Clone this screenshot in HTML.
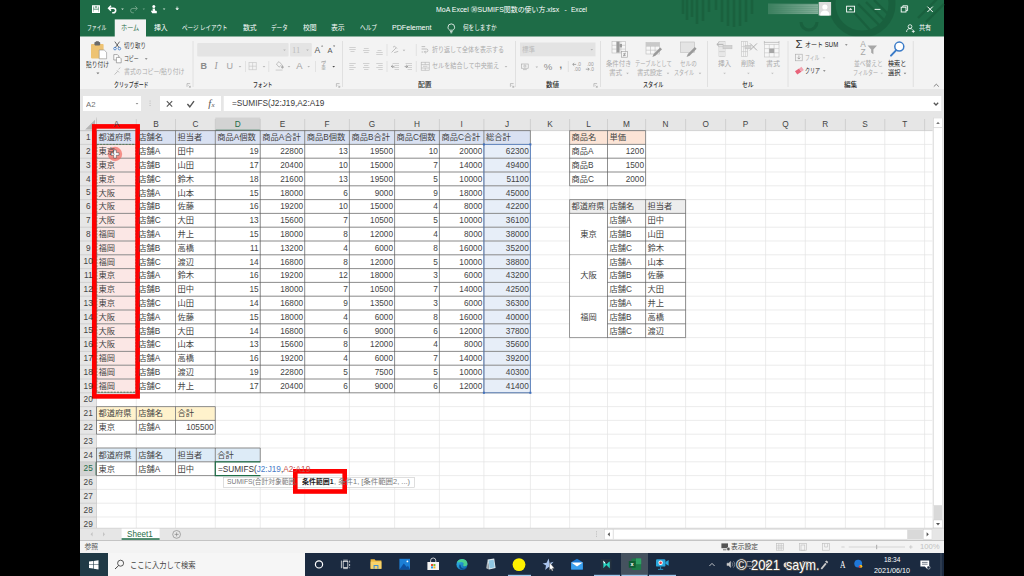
<!DOCTYPE html>
<html lang="ja"><head><meta charset="utf-8"><title>MoA Excel SUMIFS</title>
<style>
html,body{margin:0;padding:0;background:#000;}
body{width:1024px;height:576px;position:relative;overflow:hidden;font-family:"Liberation Sans","Noto Sans CJK JP",sans-serif;}
#g{position:absolute;left:0;top:0;}
.t{position:absolute;white-space:nowrap;line-height:1.5;display:block;}
</style></head><body>
<svg id="g" width="1024" height="576" viewBox="0 0 1024 576">
<rect x="80.00" y="0.00" width="864.00" height="37.00" fill="#1e6c47" />
<g fill="none" stroke="#185c3b" opacity="0.7"><path d="M683 0v14M687 0v20M692 0v17M697 0v24M703 0v21M709 0v12M716 0v10M722 0v22M728 0v26M734 0v27M740 0v26M746 0v22M752 0v14" stroke-width="2.6"/><path d="M801 22a8 8 0 0 0 16 0" stroke-width="3"/><circle cx="862" cy="4" r="30" stroke-width="7"/><path d="M850 8l20 22M858 4l22 22M866 2l20 20M874 0l16 16" stroke-width="2.4"/><path d="M918 18l20-20M926 22l18-18" stroke-width="2.4"/></g>
<rect x="80.00" y="36.50" width="864.00" height="52.50" fill="#f3f3f3" />
<rect x="80.00" y="89.00" width="864.00" height="29.00" fill="#e6e6e6" />
<rect x="114.75" y="19.40" width="31.25" height="17.60" fill="#f3f3f3" />
<rect x="83.00" y="96.00" width="58.00" height="15.00" fill="#fff" />
<rect x="160.00" y="96.00" width="61.00" height="15.00" fill="#fff" />
<rect x="223.75" y="96.00" width="717.50" height="15.00" fill="#fff" />
<rect x="80.00" y="117.50" width="864.00" height="411.00" fill="#e6e6e6" />
<rect x="96.50" y="130.60" width="836.00" height="397.40" fill="#fff" />
<rect x="80.00" y="528.00" width="864.00" height="12.50" fill="#e6e6e6" />
<rect x="80.00" y="540.50" width="864.00" height="12.50" fill="#f3f3f3" />
<line x1="80.00" y1="540.50" x2="944.00" y2="540.50" stroke="#d0d0d0" stroke-width="0.6" />
<rect x="96.50" y="130.60" width="433.90" height="13.80" fill="#d9e1f2" />
<rect x="96.50" y="144.40" width="39.80" height="248.40" fill="#fbe7e5" />
<rect x="483.90" y="144.40" width="46.50" height="248.40" fill="#e7eef8" />
<rect x="569.60" y="130.60" width="76.00" height="13.80" fill="#fce4d6" />
<rect x="569.60" y="199.60" width="116.00" height="13.80" fill="#ededed" />
<rect x="96.50" y="406.60" width="118.80" height="13.80" fill="#fff2cc" />
<rect x="96.50" y="448.00" width="163.75" height="13.80" fill="#ddebf7" />
<line x1="136.30" y1="130.60" x2="136.30" y2="528.00" stroke="#e4e4e4" stroke-width="0.7" />
<line x1="175.50" y1="130.60" x2="175.50" y2="528.00" stroke="#e4e4e4" stroke-width="0.7" />
<line x1="215.30" y1="130.60" x2="215.30" y2="528.00" stroke="#e4e4e4" stroke-width="0.7" />
<line x1="260.25" y1="130.60" x2="260.25" y2="528.00" stroke="#e4e4e4" stroke-width="0.7" />
<line x1="304.70" y1="130.60" x2="304.70" y2="528.00" stroke="#e4e4e4" stroke-width="0.7" />
<line x1="349.40" y1="130.60" x2="349.40" y2="528.00" stroke="#e4e4e4" stroke-width="0.7" />
<line x1="394.60" y1="130.60" x2="394.60" y2="528.00" stroke="#e4e4e4" stroke-width="0.7" />
<line x1="439.40" y1="130.60" x2="439.40" y2="528.00" stroke="#e4e4e4" stroke-width="0.7" />
<line x1="483.90" y1="130.60" x2="483.90" y2="528.00" stroke="#e4e4e4" stroke-width="0.7" />
<line x1="530.40" y1="130.60" x2="530.40" y2="528.00" stroke="#e4e4e4" stroke-width="0.7" />
<line x1="569.60" y1="130.60" x2="569.60" y2="528.00" stroke="#e4e4e4" stroke-width="0.7" />
<line x1="607.50" y1="130.60" x2="607.50" y2="528.00" stroke="#e4e4e4" stroke-width="0.7" />
<line x1="645.60" y1="130.60" x2="645.60" y2="528.00" stroke="#e4e4e4" stroke-width="0.7" />
<line x1="685.60" y1="130.60" x2="685.60" y2="528.00" stroke="#e4e4e4" stroke-width="0.7" />
<line x1="725.60" y1="130.60" x2="725.60" y2="528.00" stroke="#e4e4e4" stroke-width="0.7" />
<line x1="765.60" y1="130.60" x2="765.60" y2="528.00" stroke="#e4e4e4" stroke-width="0.7" />
<line x1="805.30" y1="130.60" x2="805.30" y2="528.00" stroke="#e4e4e4" stroke-width="0.7" />
<line x1="845.40" y1="130.60" x2="845.40" y2="528.00" stroke="#e4e4e4" stroke-width="0.7" />
<line x1="884.80" y1="130.60" x2="884.80" y2="528.00" stroke="#e4e4e4" stroke-width="0.7" />
<line x1="924.60" y1="130.60" x2="924.60" y2="528.00" stroke="#e4e4e4" stroke-width="0.7" />
<line x1="96.50" y1="144.40" x2="932.50" y2="144.40" stroke="#e4e4e4" stroke-width="0.7" />
<line x1="96.50" y1="158.20" x2="932.50" y2="158.20" stroke="#e4e4e4" stroke-width="0.7" />
<line x1="96.50" y1="172.00" x2="932.50" y2="172.00" stroke="#e4e4e4" stroke-width="0.7" />
<line x1="96.50" y1="185.80" x2="932.50" y2="185.80" stroke="#e4e4e4" stroke-width="0.7" />
<line x1="96.50" y1="199.60" x2="932.50" y2="199.60" stroke="#e4e4e4" stroke-width="0.7" />
<line x1="96.50" y1="213.40" x2="932.50" y2="213.40" stroke="#e4e4e4" stroke-width="0.7" />
<line x1="96.50" y1="227.20" x2="932.50" y2="227.20" stroke="#e4e4e4" stroke-width="0.7" />
<line x1="96.50" y1="241.00" x2="932.50" y2="241.00" stroke="#e4e4e4" stroke-width="0.7" />
<line x1="96.50" y1="254.80" x2="932.50" y2="254.80" stroke="#e4e4e4" stroke-width="0.7" />
<line x1="96.50" y1="268.60" x2="932.50" y2="268.60" stroke="#e4e4e4" stroke-width="0.7" />
<line x1="96.50" y1="282.40" x2="932.50" y2="282.40" stroke="#e4e4e4" stroke-width="0.7" />
<line x1="96.50" y1="296.20" x2="932.50" y2="296.20" stroke="#e4e4e4" stroke-width="0.7" />
<line x1="96.50" y1="310.00" x2="932.50" y2="310.00" stroke="#e4e4e4" stroke-width="0.7" />
<line x1="96.50" y1="323.80" x2="932.50" y2="323.80" stroke="#e4e4e4" stroke-width="0.7" />
<line x1="96.50" y1="337.60" x2="932.50" y2="337.60" stroke="#e4e4e4" stroke-width="0.7" />
<line x1="96.50" y1="351.40" x2="932.50" y2="351.40" stroke="#e4e4e4" stroke-width="0.7" />
<line x1="96.50" y1="365.20" x2="932.50" y2="365.20" stroke="#e4e4e4" stroke-width="0.7" />
<line x1="96.50" y1="379.00" x2="932.50" y2="379.00" stroke="#e4e4e4" stroke-width="0.7" />
<line x1="96.50" y1="392.80" x2="932.50" y2="392.80" stroke="#e4e4e4" stroke-width="0.7" />
<line x1="96.50" y1="406.60" x2="932.50" y2="406.60" stroke="#e4e4e4" stroke-width="0.7" />
<line x1="96.50" y1="420.40" x2="932.50" y2="420.40" stroke="#e4e4e4" stroke-width="0.7" />
<line x1="96.50" y1="434.20" x2="932.50" y2="434.20" stroke="#e4e4e4" stroke-width="0.7" />
<line x1="96.50" y1="448.00" x2="932.50" y2="448.00" stroke="#e4e4e4" stroke-width="0.7" />
<line x1="96.50" y1="461.80" x2="932.50" y2="461.80" stroke="#e4e4e4" stroke-width="0.7" />
<line x1="96.50" y1="475.60" x2="932.50" y2="475.60" stroke="#e4e4e4" stroke-width="0.7" />
<line x1="96.50" y1="489.40" x2="932.50" y2="489.40" stroke="#e4e4e4" stroke-width="0.7" />
<line x1="96.50" y1="503.20" x2="932.50" y2="503.20" stroke="#e4e4e4" stroke-width="0.7" />
<line x1="96.50" y1="517.00" x2="932.50" y2="517.00" stroke="#e4e4e4" stroke-width="0.7" />
<rect x="215.30" y="117.50" width="44.95" height="13.10" fill="#d3d3d3" />
<line x1="215.30" y1="130.30" x2="260.25" y2="130.30" stroke="#1e6c47" stroke-width="1.2" />
<rect x="80.00" y="461.80" width="16.50" height="13.80" fill="#d3d3d3" />
<line x1="96.20" y1="461.80" x2="96.20" y2="475.60" stroke="#1e6c47" stroke-width="1.2" />
<line x1="96.50" y1="119.00" x2="96.50" y2="130.60" stroke="#c6c6c6" stroke-width="0.7" />
<line x1="136.30" y1="119.00" x2="136.30" y2="130.60" stroke="#c6c6c6" stroke-width="0.7" />
<line x1="175.50" y1="119.00" x2="175.50" y2="130.60" stroke="#c6c6c6" stroke-width="0.7" />
<line x1="215.30" y1="119.00" x2="215.30" y2="130.60" stroke="#c6c6c6" stroke-width="0.7" />
<line x1="260.25" y1="119.00" x2="260.25" y2="130.60" stroke="#c6c6c6" stroke-width="0.7" />
<line x1="304.70" y1="119.00" x2="304.70" y2="130.60" stroke="#c6c6c6" stroke-width="0.7" />
<line x1="349.40" y1="119.00" x2="349.40" y2="130.60" stroke="#c6c6c6" stroke-width="0.7" />
<line x1="394.60" y1="119.00" x2="394.60" y2="130.60" stroke="#c6c6c6" stroke-width="0.7" />
<line x1="439.40" y1="119.00" x2="439.40" y2="130.60" stroke="#c6c6c6" stroke-width="0.7" />
<line x1="483.90" y1="119.00" x2="483.90" y2="130.60" stroke="#c6c6c6" stroke-width="0.7" />
<line x1="530.40" y1="119.00" x2="530.40" y2="130.60" stroke="#c6c6c6" stroke-width="0.7" />
<line x1="569.60" y1="119.00" x2="569.60" y2="130.60" stroke="#c6c6c6" stroke-width="0.7" />
<line x1="607.50" y1="119.00" x2="607.50" y2="130.60" stroke="#c6c6c6" stroke-width="0.7" />
<line x1="645.60" y1="119.00" x2="645.60" y2="130.60" stroke="#c6c6c6" stroke-width="0.7" />
<line x1="685.60" y1="119.00" x2="685.60" y2="130.60" stroke="#c6c6c6" stroke-width="0.7" />
<line x1="725.60" y1="119.00" x2="725.60" y2="130.60" stroke="#c6c6c6" stroke-width="0.7" />
<line x1="765.60" y1="119.00" x2="765.60" y2="130.60" stroke="#c6c6c6" stroke-width="0.7" />
<line x1="805.30" y1="119.00" x2="805.30" y2="130.60" stroke="#c6c6c6" stroke-width="0.7" />
<line x1="845.40" y1="119.00" x2="845.40" y2="130.60" stroke="#c6c6c6" stroke-width="0.7" />
<line x1="884.80" y1="119.00" x2="884.80" y2="130.60" stroke="#c6c6c6" stroke-width="0.7" />
<line x1="924.60" y1="119.00" x2="924.60" y2="130.60" stroke="#c6c6c6" stroke-width="0.7" />
<line x1="80.00" y1="130.60" x2="96.50" y2="130.60" stroke="#c6c6c6" stroke-width="0.7" />
<line x1="80.00" y1="144.40" x2="96.50" y2="144.40" stroke="#c6c6c6" stroke-width="0.7" />
<line x1="80.00" y1="158.20" x2="96.50" y2="158.20" stroke="#c6c6c6" stroke-width="0.7" />
<line x1="80.00" y1="172.00" x2="96.50" y2="172.00" stroke="#c6c6c6" stroke-width="0.7" />
<line x1="80.00" y1="185.80" x2="96.50" y2="185.80" stroke="#c6c6c6" stroke-width="0.7" />
<line x1="80.00" y1="199.60" x2="96.50" y2="199.60" stroke="#c6c6c6" stroke-width="0.7" />
<line x1="80.00" y1="213.40" x2="96.50" y2="213.40" stroke="#c6c6c6" stroke-width="0.7" />
<line x1="80.00" y1="227.20" x2="96.50" y2="227.20" stroke="#c6c6c6" stroke-width="0.7" />
<line x1="80.00" y1="241.00" x2="96.50" y2="241.00" stroke="#c6c6c6" stroke-width="0.7" />
<line x1="80.00" y1="254.80" x2="96.50" y2="254.80" stroke="#c6c6c6" stroke-width="0.7" />
<line x1="80.00" y1="268.60" x2="96.50" y2="268.60" stroke="#c6c6c6" stroke-width="0.7" />
<line x1="80.00" y1="282.40" x2="96.50" y2="282.40" stroke="#c6c6c6" stroke-width="0.7" />
<line x1="80.00" y1="296.20" x2="96.50" y2="296.20" stroke="#c6c6c6" stroke-width="0.7" />
<line x1="80.00" y1="310.00" x2="96.50" y2="310.00" stroke="#c6c6c6" stroke-width="0.7" />
<line x1="80.00" y1="323.80" x2="96.50" y2="323.80" stroke="#c6c6c6" stroke-width="0.7" />
<line x1="80.00" y1="337.60" x2="96.50" y2="337.60" stroke="#c6c6c6" stroke-width="0.7" />
<line x1="80.00" y1="351.40" x2="96.50" y2="351.40" stroke="#c6c6c6" stroke-width="0.7" />
<line x1="80.00" y1="365.20" x2="96.50" y2="365.20" stroke="#c6c6c6" stroke-width="0.7" />
<line x1="80.00" y1="379.00" x2="96.50" y2="379.00" stroke="#c6c6c6" stroke-width="0.7" />
<line x1="80.00" y1="392.80" x2="96.50" y2="392.80" stroke="#c6c6c6" stroke-width="0.7" />
<line x1="80.00" y1="406.60" x2="96.50" y2="406.60" stroke="#c6c6c6" stroke-width="0.7" />
<line x1="80.00" y1="420.40" x2="96.50" y2="420.40" stroke="#c6c6c6" stroke-width="0.7" />
<line x1="80.00" y1="434.20" x2="96.50" y2="434.20" stroke="#c6c6c6" stroke-width="0.7" />
<line x1="80.00" y1="448.00" x2="96.50" y2="448.00" stroke="#c6c6c6" stroke-width="0.7" />
<line x1="80.00" y1="461.80" x2="96.50" y2="461.80" stroke="#c6c6c6" stroke-width="0.7" />
<line x1="80.00" y1="475.60" x2="96.50" y2="475.60" stroke="#c6c6c6" stroke-width="0.7" />
<line x1="80.00" y1="489.40" x2="96.50" y2="489.40" stroke="#c6c6c6" stroke-width="0.7" />
<line x1="80.00" y1="503.20" x2="96.50" y2="503.20" stroke="#c6c6c6" stroke-width="0.7" />
<line x1="80.00" y1="517.00" x2="96.50" y2="517.00" stroke="#c6c6c6" stroke-width="0.7" />
<line x1="80.00" y1="130.60" x2="932.50" y2="130.60" stroke="#c6c6c6" stroke-width="0.7" />
<line x1="96.50" y1="117.50" x2="96.50" y2="528.00" stroke="#c6c6c6" stroke-width="0.7" />
<path d="M95 119.8v9.8h-9.8z" fill="#b5b5b5"/>
<line x1="96.50" y1="130.60" x2="530.40" y2="130.60" stroke="#555" stroke-width="0.62" />
<line x1="96.50" y1="144.40" x2="530.40" y2="144.40" stroke="#555" stroke-width="0.62" />
<line x1="96.50" y1="158.20" x2="530.40" y2="158.20" stroke="#555" stroke-width="0.62" />
<line x1="96.50" y1="172.00" x2="530.40" y2="172.00" stroke="#555" stroke-width="0.62" />
<line x1="96.50" y1="185.80" x2="530.40" y2="185.80" stroke="#555" stroke-width="0.62" />
<line x1="96.50" y1="199.60" x2="530.40" y2="199.60" stroke="#555" stroke-width="0.62" />
<line x1="96.50" y1="213.40" x2="530.40" y2="213.40" stroke="#555" stroke-width="0.62" />
<line x1="96.50" y1="227.20" x2="530.40" y2="227.20" stroke="#555" stroke-width="0.62" />
<line x1="96.50" y1="241.00" x2="530.40" y2="241.00" stroke="#555" stroke-width="0.62" />
<line x1="96.50" y1="254.80" x2="530.40" y2="254.80" stroke="#555" stroke-width="0.62" />
<line x1="96.50" y1="268.60" x2="530.40" y2="268.60" stroke="#555" stroke-width="0.62" />
<line x1="96.50" y1="282.40" x2="530.40" y2="282.40" stroke="#555" stroke-width="0.62" />
<line x1="96.50" y1="296.20" x2="530.40" y2="296.20" stroke="#555" stroke-width="0.62" />
<line x1="96.50" y1="310.00" x2="530.40" y2="310.00" stroke="#555" stroke-width="0.62" />
<line x1="96.50" y1="323.80" x2="530.40" y2="323.80" stroke="#555" stroke-width="0.62" />
<line x1="96.50" y1="337.60" x2="530.40" y2="337.60" stroke="#555" stroke-width="0.62" />
<line x1="96.50" y1="351.40" x2="530.40" y2="351.40" stroke="#555" stroke-width="0.62" />
<line x1="96.50" y1="365.20" x2="530.40" y2="365.20" stroke="#555" stroke-width="0.62" />
<line x1="96.50" y1="379.00" x2="530.40" y2="379.00" stroke="#555" stroke-width="0.62" />
<line x1="96.50" y1="392.80" x2="530.40" y2="392.80" stroke="#555" stroke-width="0.62" />
<line x1="96.50" y1="130.60" x2="96.50" y2="392.80" stroke="#555" stroke-width="0.62" />
<line x1="136.30" y1="130.60" x2="136.30" y2="392.80" stroke="#555" stroke-width="0.62" />
<line x1="175.50" y1="130.60" x2="175.50" y2="392.80" stroke="#555" stroke-width="0.62" />
<line x1="215.30" y1="130.60" x2="215.30" y2="392.80" stroke="#555" stroke-width="0.62" />
<line x1="260.25" y1="130.60" x2="260.25" y2="392.80" stroke="#555" stroke-width="0.62" />
<line x1="304.70" y1="130.60" x2="304.70" y2="392.80" stroke="#555" stroke-width="0.62" />
<line x1="349.40" y1="130.60" x2="349.40" y2="392.80" stroke="#555" stroke-width="0.62" />
<line x1="394.60" y1="130.60" x2="394.60" y2="392.80" stroke="#555" stroke-width="0.62" />
<line x1="439.40" y1="130.60" x2="439.40" y2="392.80" stroke="#555" stroke-width="0.62" />
<line x1="483.90" y1="130.60" x2="483.90" y2="392.80" stroke="#555" stroke-width="0.62" />
<line x1="530.40" y1="130.60" x2="530.40" y2="392.80" stroke="#555" stroke-width="0.62" />
<line x1="569.60" y1="130.60" x2="645.60" y2="130.60" stroke="#555" stroke-width="0.62" />
<line x1="569.60" y1="144.40" x2="645.60" y2="144.40" stroke="#555" stroke-width="0.62" />
<line x1="569.60" y1="158.20" x2="645.60" y2="158.20" stroke="#555" stroke-width="0.62" />
<line x1="569.60" y1="172.00" x2="645.60" y2="172.00" stroke="#555" stroke-width="0.62" />
<line x1="569.60" y1="185.80" x2="645.60" y2="185.80" stroke="#555" stroke-width="0.62" />
<line x1="569.60" y1="130.60" x2="569.60" y2="185.80" stroke="#555" stroke-width="0.62" />
<line x1="607.50" y1="130.60" x2="607.50" y2="185.80" stroke="#555" stroke-width="0.62" />
<line x1="645.60" y1="130.60" x2="645.60" y2="185.80" stroke="#555" stroke-width="0.62" />
<line x1="96.50" y1="406.60" x2="215.30" y2="406.60" stroke="#555" stroke-width="0.62" />
<line x1="96.50" y1="420.40" x2="215.30" y2="420.40" stroke="#555" stroke-width="0.62" />
<line x1="96.50" y1="434.20" x2="215.30" y2="434.20" stroke="#555" stroke-width="0.62" />
<line x1="96.50" y1="406.60" x2="96.50" y2="434.20" stroke="#555" stroke-width="0.62" />
<line x1="136.30" y1="406.60" x2="136.30" y2="434.20" stroke="#555" stroke-width="0.62" />
<line x1="175.50" y1="406.60" x2="175.50" y2="434.20" stroke="#555" stroke-width="0.62" />
<line x1="215.30" y1="406.60" x2="215.30" y2="434.20" stroke="#555" stroke-width="0.62" />
<line x1="96.50" y1="448.00" x2="260.25" y2="448.00" stroke="#555" stroke-width="0.62" />
<line x1="96.50" y1="461.80" x2="260.25" y2="461.80" stroke="#555" stroke-width="0.62" />
<line x1="96.50" y1="475.60" x2="260.25" y2="475.60" stroke="#555" stroke-width="0.62" />
<line x1="96.50" y1="448.00" x2="96.50" y2="475.60" stroke="#555" stroke-width="0.62" />
<line x1="136.30" y1="448.00" x2="136.30" y2="475.60" stroke="#555" stroke-width="0.62" />
<line x1="175.50" y1="448.00" x2="175.50" y2="475.60" stroke="#555" stroke-width="0.62" />
<line x1="215.30" y1="448.00" x2="215.30" y2="475.60" stroke="#555" stroke-width="0.62" />
<line x1="260.25" y1="448.00" x2="260.25" y2="475.60" stroke="#555" stroke-width="0.62" />
<line x1="569.60" y1="199.60" x2="685.60" y2="199.60" stroke="#555" stroke-width="0.62" />
<line x1="569.60" y1="213.40" x2="685.60" y2="213.40" stroke="#555" stroke-width="0.62" />
<line x1="607.50" y1="227.20" x2="685.60" y2="227.20" stroke="#555" stroke-width="0.62" />
<line x1="607.50" y1="241.00" x2="685.60" y2="241.00" stroke="#555" stroke-width="0.62" />
<line x1="569.60" y1="254.80" x2="685.60" y2="254.80" stroke="#555" stroke-width="0.62" />
<line x1="607.50" y1="268.60" x2="685.60" y2="268.60" stroke="#555" stroke-width="0.62" />
<line x1="607.50" y1="282.40" x2="685.60" y2="282.40" stroke="#555" stroke-width="0.62" />
<line x1="569.60" y1="296.20" x2="685.60" y2="296.20" stroke="#555" stroke-width="0.62" />
<line x1="607.50" y1="310.00" x2="685.60" y2="310.00" stroke="#555" stroke-width="0.62" />
<line x1="607.50" y1="323.80" x2="685.60" y2="323.80" stroke="#555" stroke-width="0.62" />
<line x1="569.60" y1="337.60" x2="685.60" y2="337.60" stroke="#555" stroke-width="0.62" />
<line x1="569.60" y1="199.60" x2="569.60" y2="337.60" stroke="#555" stroke-width="0.62" />
<line x1="607.50" y1="199.60" x2="607.50" y2="337.60" stroke="#555" stroke-width="0.62" />
<line x1="645.60" y1="199.60" x2="645.60" y2="337.60" stroke="#555" stroke-width="0.62" />
<line x1="685.60" y1="199.60" x2="685.60" y2="337.60" stroke="#555" stroke-width="0.62" />
<rect x="570.10" y="213.90" width="36.90" height="40.40" fill="#fff" />
<rect x="570.10" y="255.30" width="36.90" height="40.40" fill="#fff" />
<rect x="570.10" y="296.70" width="36.90" height="40.40" fill="#fff" />
<rect x="215.80" y="462.30" width="100.00" height="12.80" fill="#fff" />
<path d="M260.25 461.80H215.30V475.60H260.25" fill="none" stroke="#1e6c47" stroke-width="1.2"/>
<rect x="483.90" y="144.40" width="46.50" height="248.40" fill="none" stroke="#6089c9" stroke-width="0.85"/>
<rect x="482.90" y="143.40" width="2.00" height="2.00" fill="#3f6fbd" />
<rect x="529.40" y="143.40" width="2.00" height="2.00" fill="#3f6fbd" />
<rect x="482.90" y="391.80" width="2.00" height="2.00" fill="#3f6fbd" />
<rect x="529.40" y="391.80" width="2.00" height="2.00" fill="#3f6fbd" />
<rect x="96.80" y="144.40" width="39.20" height="247.80" fill="none" stroke="#5a7a5a" stroke-width="1" stroke-dasharray="2 1.2"/>
<rect x="933.50" y="117.50" width="9.00" height="411.00" fill="#f0f0f0" />
<rect x="933.70" y="118.00" width="8.60" height="9.50" fill="#fff" stroke="#cfcfcf" stroke-width="0.5"/>
<path d="M936.2 124l1.8-2.2 1.8 2.2z" fill="#777"/>
<rect x="933.70" y="127.80" width="8.60" height="377.70" fill="#fff" stroke="#d5d5d5" stroke-width="0.5"/>
<rect x="933.70" y="505.50" width="8.60" height="14.50" fill="#d9d9d9" />
<rect x="933.70" y="520.00" width="8.60" height="8.00" fill="#fff" stroke="#cfcfcf" stroke-width="0.5"/>
<path d="M936 523l2 2.4 2-2.4z" fill="#555"/>
<g stroke="#fff" fill="none" stroke-width="1.2"><path d="M92.6 5.8h6.8v6.6h-6.8z"/><path d="M94.2 5.8v2.4h3.6v-2.4" /><path d="M94 12.4v-2.4h4v2.4" fill="#fff"/><path d="M109 8.2h4.4a2.3 2.3 0 0 1 0 4.6h-1.2" stroke-width="1.5"/><path d="M111 5.8l-2.4 2.4 2.4 2.4" stroke-width="1.5"/></g>
<g stroke="#6fa387" fill="none" stroke-width="1"><path d="M137 8.4h-4.2a2.2 2.2 0 0 0 0 4.4h1"/><path d="M135.2 6.2l2.2 2.2-2.2 2.2"/></g>
<path d="M121.2 8.6l1.3 1.4 1.3-1.4z" fill="#cfe3d8"/><path d="M142.6 8.6l1.2 1.3 1.2-1.3z" fill="#6fa387"/>
<g fill="#fff"><circle cx="153.8" cy="6.6" r="1.5"/><path d="M152.6 8.4h2.4v2l1.8.6v2.2h-4.6l-1.3-2.2 1-.5.7.8z"/></g>
<path d="M162.8 8.6l1.3 1.4 1.3-1.4z" fill="#cfe3d8"/><path d="M175.9 8.6h2.6l-1.3 1.4zM176.2 7.2h2" stroke="#fff" stroke-width="0.6" fill="#fff"/>
<defs><linearGradient id="ug" x1="0" x2="1"><stop offset="0" stop-color="#fff" stop-opacity="0"/><stop offset="1" stop-color="#fff" stop-opacity="0.75"/></linearGradient></defs>
<rect x="768.00" y="3.40" width="50.70" height="10.80" fill="#fff" fill-opacity="0.13"/>
<rect x="768.00" y="4.60" width="50.00" height="0.90" fill="url(#ug)" />
<rect x="768.00" y="6.60" width="50.00" height="0.90" fill="url(#ug)" />
<rect x="768.00" y="8.60" width="50.00" height="0.90" fill="url(#ug)" />
<rect x="768.00" y="10.60" width="50.00" height="0.90" fill="url(#ug)" />
<rect x="768.00" y="12.60" width="50.00" height="0.90" fill="url(#ug)" />
<rect x="818.70" y="2.00" width="12.40" height="13.50" fill="#dcdcdc" />
<g fill="#fff"><circle cx="824.9" cy="7" r="2.6"/><path d="M820.2 15.5c0-3.4 2-5 4.7-5s4.7 1.6 4.7 5z"/></g>
<g stroke="#fff" fill="none" stroke-width="0.9"><rect x="846.6" y="6.2" width="8" height="5.8"/><path d="M849.2 9.8l1.4-1.6 1.4 1.6z" fill="#fff" stroke-width="0.5"/><path d="M874.6 9.4h5.8"/><rect x="901.2" y="7.2" width="4.8" height="4.8"/><path d="M902.8 7.2v-1.4h4.8v4.8h-1.6"/><path d="M927.4 6.6l5.4 5.4M932.8 6.6l-5.4 5.4" stroke-width="1"/></g>
<g stroke="#fff" fill="none" stroke-width="0.8"><circle cx="910" cy="26.6" r="1.9"/><path d="M906.6 32c0-2.4 1.4-3.4 3.4-3.4 1.2 0 2 .4 2.6 1M911.8 31.4h3M913.3 29.9v3"/></g>
<g stroke="#fff" fill="none" stroke-width="0.8"><path d="M449.6 30.2c-1.2-1-1.6-1.9-1.6-3a3.3 3.3 0 0 1 6.6 0c0 1.1-.4 2-1.6 3z"/><path d="M450 31.6h2.6M450.4 32.8h1.8"/></g>
<line x1="193.00" y1="41.00" x2="193.00" y2="87.00" stroke="#dadada" stroke-width="0.8" />
<line x1="342.50" y1="41.00" x2="342.50" y2="87.00" stroke="#dadada" stroke-width="0.8" />
<line x1="515.50" y1="41.00" x2="515.50" y2="87.00" stroke="#dadada" stroke-width="0.8" />
<line x1="600.50" y1="41.00" x2="600.50" y2="87.00" stroke="#dadada" stroke-width="0.8" />
<line x1="707.50" y1="41.00" x2="707.50" y2="87.00" stroke="#dadada" stroke-width="0.8" />
<line x1="788.00" y1="41.00" x2="788.00" y2="87.00" stroke="#dadada" stroke-width="0.8" />
<line x1="913.25" y1="41.00" x2="913.25" y2="87.00" stroke="#dadada" stroke-width="0.8" />
<g><rect x="91" y="44" width="12.6" height="14.4" rx="0.8" fill="#eec373"/><rect x="94.4" y="42" width="5.8" height="3.4" rx="0.8" fill="#6b6b6b"/><rect x="95.8" y="41.2" width="3" height="1.6" fill="#6b6b6b"/><path d="M99.2 50h5l2.4 2.4v6.4h-7.4z" fill="#fff" stroke="#8c8c8c" stroke-width="0.6"/></g>
<path d="M96.4 72.6l1.5 1.6 1.5-1.6z" fill="#777"/>
<g stroke="#444" stroke-width="0.8" fill="none"><path d="M114.8 41.6l4.4 6.2M119.6 41.6l-4.4 6.2"/></g><g stroke="#3a78c9" stroke-width="0.8" fill="none"><circle cx="115" cy="48.6" r="1.3"/><circle cx="119.4" cy="48.6" r="1.3"/></g>
<g stroke="#777" stroke-width="0.6" fill="#fff"><path d="M113.8 54.6h3.6l1.4 1.4v4h-5z"/><path d="M116.4 57.4h3.4l1.4 1.4v4h-4.8z"/></g>
<path d="M144.8 58.2l1.4 1.5 1.4-1.5z" fill="#777"/>
<g stroke="#b5b5b5" stroke-width="0.9" fill="none"><path d="M114.6 74.6l3-3.2M117 70.4l2 2M118.6 69.4l1.6-1.8"/></g>
<path d="M187.0 86.8v-3.2h3.2M188.4 85.4l1.8 1.8M190.4 85.8v1.5h-1.5" stroke="#8e8e8e" stroke-width="0.5" fill="none"/>
<path d="M336.4 86.8v-3.2h3.2M337.8 85.4l1.8 1.8M339.8 85.8v1.5h-1.5" stroke="#8e8e8e" stroke-width="0.5" fill="none"/>
<path d="M510.4 86.8v-3.2h3.2M511.8 85.4l1.8 1.8M513.8 85.8v1.5h-1.5" stroke="#8e8e8e" stroke-width="0.5" fill="none"/>
<path d="M593.9 86.8v-3.2h3.2M595.3 85.4l1.8 1.8M597.3 85.8v1.5h-1.5" stroke="#8e8e8e" stroke-width="0.5" fill="none"/>
<rect x="197.20" y="43.00" width="91.40" height="13.60" fill="#e4e4e4" rx="1"/>
<rect x="290.00" y="43.00" width="21.80" height="13.60" fill="#e4e4e4" rx="1"/>
<path d="M283.2 49.5l1.3 1.5 1.3-1.5z" fill="#b5b5b5"/>
<path d="M306.2 49.5l1.3 1.5 1.3-1.5z" fill="#b5b5b5"/>
<path d="M321 46.6l1.1-1.3 1.1 1.3z" fill="#666"/><path d="M333 45.6l1.1 1.3 1.1-1.3z" fill="#666"/>
<path d="M238.7 66.1l1.3 1.5 1.3-1.5z" fill="#b5b5b5"/>
<line x1="245.50" y1="61.00" x2="245.50" y2="72.00" stroke="#dadada" stroke-width="0.7" />
<g stroke="#c4c4c4" stroke-width="0.6" fill="none"><rect x="249" y="62.6" width="7.2" height="7.2"/><path d="M252.6 62.6v7.2M249 66.2h7.2"/></g>
<path d="M262.7 66.1l1.3 1.5 1.3-1.5z" fill="#b5b5b5"/>
<line x1="268.75" y1="61.00" x2="268.75" y2="72.00" stroke="#dadada" stroke-width="0.7" />
<g stroke="#a9a9a9" stroke-width="0.7" fill="none"><path d="M276.4 64l2.6-2.4 2.8 3-2.8 2.6z"/><path d="M282.4 65.4c.6.9.9 1.4.9 1.9a.9.9 0 0 1-1.8 0c0-.5.3-1 .9-1.9z" fill="#a9a9a9"/></g><rect x="275.6" y="69.4" width="7" height="1.4" fill="#d8d8d8"/>
<path d="M287.7 66.1l1.3 1.5 1.3-1.5z" fill="#b5b5b5"/>
<path d="M307.4 66.1l1.3 1.5 1.3-1.5z" fill="#b5b5b5"/>
<line x1="315.50" y1="61.00" x2="315.50" y2="72.00" stroke="#dadada" stroke-width="0.7" />
<path d="M321 62.2l5-1.2" stroke="#8a8a8a" stroke-width="0.5"/>
<path d="M332.4 66.1l1.3 1.5 1.3-1.5z" fill="#444"/>
<line x1="349.30" y1="47.50" x2="355.70" y2="47.50" stroke="#c2c2c2" stroke-width="0.7" />
<line x1="349.30" y1="49.50" x2="355.70" y2="49.50" stroke="#c2c2c2" stroke-width="0.7" />
<line x1="350.50" y1="51.50" x2="354.50" y2="51.50" stroke="#c2c2c2" stroke-width="0.7" />
<line x1="363.85" y1="48.50" x2="368.65" y2="48.50" stroke="#c2c2c2" stroke-width="0.7" />
<line x1="363.05" y1="50.50" x2="369.45" y2="50.50" stroke="#c2c2c2" stroke-width="0.7" />
<line x1="363.85" y1="52.50" x2="368.65" y2="52.50" stroke="#c2c2c2" stroke-width="0.7" />
<line x1="377.50" y1="50.50" x2="381.50" y2="50.50" stroke="#c2c2c2" stroke-width="0.7" />
<line x1="376.30" y1="52.50" x2="382.70" y2="52.50" stroke="#c2c2c2" stroke-width="0.7" />
<line x1="376.30" y1="54.50" x2="382.70" y2="54.50" stroke="#c2c2c2" stroke-width="0.7" />
<line x1="349.30" y1="63.50" x2="355.70" y2="63.50" stroke="#c2c2c2" stroke-width="0.7" />
<line x1="349.30" y1="65.50" x2="353.70" y2="65.50" stroke="#c2c2c2" stroke-width="0.7" />
<line x1="349.30" y1="67.50" x2="355.70" y2="67.50" stroke="#c2c2c2" stroke-width="0.7" />
<line x1="349.30" y1="69.50" x2="353.70" y2="69.50" stroke="#c2c2c2" stroke-width="0.7" />
<line x1="363.05" y1="63.50" x2="369.45" y2="63.50" stroke="#c2c2c2" stroke-width="0.7" />
<line x1="364.05" y1="65.50" x2="368.45" y2="65.50" stroke="#c2c2c2" stroke-width="0.7" />
<line x1="363.05" y1="67.50" x2="369.45" y2="67.50" stroke="#c2c2c2" stroke-width="0.7" />
<line x1="364.05" y1="69.50" x2="368.45" y2="69.50" stroke="#c2c2c2" stroke-width="0.7" />
<line x1="376.30" y1="63.50" x2="382.70" y2="63.50" stroke="#c2c2c2" stroke-width="0.7" />
<line x1="378.30" y1="65.50" x2="382.70" y2="65.50" stroke="#c2c2c2" stroke-width="0.7" />
<line x1="376.30" y1="67.50" x2="382.70" y2="67.50" stroke="#c2c2c2" stroke-width="0.7" />
<line x1="378.30" y1="69.50" x2="382.70" y2="69.50" stroke="#c2c2c2" stroke-width="0.7" />
<line x1="387.00" y1="44.00" x2="387.00" y2="56.00" stroke="#dadada" stroke-width="0.7" />
<line x1="387.00" y1="61.00" x2="387.00" y2="72.00" stroke="#dadada" stroke-width="0.7" />
<g stroke="#a8a8a8" stroke-width="0.7" fill="none"><path d="M391.6 52.4l4.6-4.6M393 47.2l1.6-1 2.4 2.4M394.2 52.6l4-1.2"/></g>
<path d="M402.7 49.7l1.3 1.5 1.3-1.5z" fill="#b5b5b5"/>
<line x1="392.60" y1="63.50" x2="399.00" y2="63.50" stroke="#c2c2c2" stroke-width="0.7" />
<line x1="394.60" y1="65.50" x2="399.00" y2="65.50" stroke="#c2c2c2" stroke-width="0.7" />
<line x1="392.60" y1="67.50" x2="399.00" y2="67.50" stroke="#c2c2c2" stroke-width="0.7" />
<line x1="394.60" y1="69.50" x2="399.00" y2="69.50" stroke="#c2c2c2" stroke-width="0.7" />
<line x1="405.60" y1="63.50" x2="412.00" y2="63.50" stroke="#c2c2c2" stroke-width="0.7" />
<line x1="407.60" y1="65.50" x2="412.00" y2="65.50" stroke="#c2c2c2" stroke-width="0.7" />
<line x1="405.60" y1="67.50" x2="412.00" y2="67.50" stroke="#c2c2c2" stroke-width="0.7" />
<line x1="407.60" y1="69.50" x2="412.00" y2="69.50" stroke="#c2c2c2" stroke-width="0.7" />
<path d="M391.4 66.4h3M392.8 65l-1.5 1.4 1.5 1.4M404.6 66.4h3M406.2 65l1.5 1.4-1.5 1.4" stroke="#777" stroke-width="0.6" fill="none"/>
<line x1="416.25" y1="44.00" x2="416.25" y2="56.00" stroke="#dadada" stroke-width="0.7" />
<line x1="416.25" y1="61.00" x2="416.25" y2="72.00" stroke="#dadada" stroke-width="0.7" />
<g stroke="#a8a8a8" stroke-width="0.7" fill="none"><path d="M421.6 46.6h3.6M421.6 49h4.8a1.5 1.5 0 0 1 0 3h-1.8M425.6 50.8l-1.2 1.2 1.2 1.2M421.6 52h1.6"/></g>
<g stroke="#b2b2b2" stroke-width="0.6" fill="none"><rect x="421.2" y="62.2" width="8" height="8"/><path d="M421.2 64.6h8M421.2 68h8M425.2 62.2v2.4M425.2 68v2.2M423 66.3h4.4"/></g>
<path d="M504.7 66.1l1.3 1.5 1.3-1.5z" fill="#b5b5b5"/>
<rect x="520.00" y="42.50" width="75.50" height="13.80" fill="#e3e3e3" />
<path d="M590.5 48.9l1.3 1.5 1.3-1.5z" fill="#b5b5b5"/>
<g stroke="#a8a8a8" stroke-width="0.6" fill="none"><rect x="521.6" y="64" width="6.6" height="4.2"/><circle cx="524.9" cy="66.1" r="1.1"/><path d="M523 69.6h3.8"/></g>
<path d="M535.5 66.5l1.3 1.5 1.3-1.5z" fill="#b5b5b5"/>
<line x1="568.25" y1="61.00" x2="568.25" y2="72.00" stroke="#dadada" stroke-width="0.7" />
<path d="M576.200 64.400h-3.400M574.200 63l-1.500 1.400 1.500 1.400M585.800 69.200h3.400M587.800 67.800l1.500 1.400-1.500 1.400" stroke="#8a8a8a" stroke-width="0.7" fill="none"/>
<g stroke="#bdbdbd" stroke-width="0.6" fill="#f7f7f7"><rect x="612" y="41.4" width="13.4" height="11.6"/><path d="M612 45.3h13.4M612 49.1h13.4M616.5 41.4v11.6M620.9 41.4v11.6" fill="none"/></g>
<rect x="616.60" y="41.60" width="3.00" height="11.00" fill="#9c9c9c" />
<rect x="619.60" y="44.00" width="2.40" height="3.40" fill="#9c9c9c" />
<rect x="621.4" y="51.6" width="6" height="5.6" fill="#f7f7f7" stroke="#9c9c9c" stroke-width="0.6"/><path d="M623 55.4h2.8M623 53.8h2.8M625.2 52.6l-1.4 3.8" stroke="#777" stroke-width="0.5"/>
<path d="M626.2 72.7l1.3 1.5 1.3-1.5z" fill="#b5b5b5"/>
<g stroke="#bdbdbd" stroke-width="0.6" fill="#f7f7f7"><rect x="646" y="42.6" width="13.6" height="11.4"/><path d="M646 46.4h13.6M646 50.2h13.6M650.5 42.6v11.4M655.1 42.6v11.4" fill="none"/></g>
<path d="M652.4 57l1.2-3 6.6-6.6 1.8 1.8-6.6 6.6z" fill="#9a9a9a"/><rect x="646" y="42.6" width="13.6" height="3.4" fill="#c9c9c9"/>
<path d="M666.7 72.7l1.3 1.5 1.3-1.5z" fill="#b5b5b5"/>
<rect x="680.6" y="42" width="14" height="10.4" fill="#e4e4e4" stroke="#bdbdbd" stroke-width="0.6"/><path d="M686.6 57l1.2-3 7-7 1.8 1.8-7 7z" fill="#9a9a9a"/>
<path d="M698.7 72.7l1.3 1.5 1.3-1.5z" fill="#b5b5b5"/>
<g stroke="#c4c4c4" stroke-width="0.6" fill="#f7f7f7"><rect x="719" y="41.6" width="6" height="15"/><path d="M719 46.6h6M719 51.6h6M721.0 41.6v15M723.0 41.6v15" fill="none"/></g>
<rect x="723.00" y="45.40" width="9.00" height="3.40" fill="#d3d3d3" stroke="#bdbdbd" stroke-width="0.5"/>
<path d="M723.4 44.4h-6.400M719.200 42.200l-2.400 2.200 2.400 2.200" stroke="#a8a8a8" stroke-width="0.8" fill="none"/>
<path d="M723.3 72.7l1.3 1.5 1.3-1.5z" fill="#c2c2c2"/>
<g stroke="#c4c4c4" stroke-width="0.6" fill="#f7f7f7"><rect x="741.6" y="41.6" width="6" height="15"/><path d="M741.6 46.6h6M741.6 51.6h6M743.6 41.6v15M745.6 41.6v15" fill="none"/></g>
<rect x="745.00" y="45.40" width="6.00" height="3.40" fill="#d3d3d3" stroke="#bdbdbd" stroke-width="0.5"/>
<path d="M750 43.400l7 7M757 43.400l-7 7" stroke="#a8a8a8" stroke-width="0.9" fill="none"/>
<path d="M747.1 72.7l1.3 1.5 1.3-1.5z" fill="#c2c2c2"/>
<g stroke="#c4c4c4" stroke-width="0.6" fill="#f7f7f7"><rect x="764.4" y="44.4" width="14.6" height="12.6"/><path d="M764.4 48.6h14.6M764.4 52.8h14.6M769.3 44.4v12.6M774.1 44.4v12.6" fill="none"/></g>
<rect x="769.20" y="48.60" width="5.00" height="4.40" fill="#a6a6a6" />
<path d="M764.400 42.400h14.600M764.400 41v2.800M779 41v2.800" stroke="#a8a8a8" stroke-width="0.6" fill="none"/>
<path d="M771.1 72.7l1.3 1.5 1.3-1.5z" fill="#c2c2c2"/>
<path d="M845.0 44.3l1.3 1.5 1.3-1.5z" fill="#777"/>
<rect x="795.6" y="54.2" width="6.6" height="6.6" fill="none" stroke="#a8a8a8" stroke-width="0.6"/><path d="M798.9 55.4v3.6M797.4 57.6l1.5 1.5 1.5-1.5" stroke="#8e8e8e" stroke-width="0.6" fill="none"/>
<path d="M822.7 57.3l1.3 1.5 1.3-1.5z" fill="#c2c2c2"/>
<g transform="rotate(-35 799.4 70.6)"><rect x="795.4" y="68.6" width="5" height="4" fill="#e8637a"/><rect x="800.4" y="68.6" width="3" height="4" fill="#f1a3b0"/></g>
<path d="M823.0 70.3l1.3 1.5 1.3-1.5z" fill="#777"/>
<path d="M867.600 45.600h9.400l-3.600 4v4.600l-2.200-1.400v-3.200z" fill="#a6a6a6"/>
<path d="M880.5 72.7l1.3 1.5 1.3-1.5z" fill="#c2c2c2"/>
<circle cx="899.300" cy="46.600" r="4.500" fill="#fff" stroke="#3a7bc8" stroke-width="1.5"/><path d="M896 50.400l-5 5.200" stroke="#3a7bc8" stroke-width="2" stroke-linecap="round"/>
<path d="M903.7 72.7l1.3 1.5 1.3-1.5z" fill="#777"/>
<path d="M933.8 86.6l2.5-2.4 2.5 2.4" stroke="#666" stroke-width="0.8" fill="none"/>
<path d="M135.7 102.9l1.3 1.5 1.3-1.5z" fill="#888"/>
<rect x="149.70" y="100.60" width="0.70" height="0.90" fill="#a0a0a0" />
<rect x="149.70" y="102.80" width="0.70" height="0.90" fill="#a0a0a0" />
<rect x="149.70" y="105.00" width="0.70" height="0.90" fill="#a0a0a0" />
<path d="M166.800 101.200l5.400 5.400M172.200 101.200l-5.400 5.400" stroke="#555" stroke-width="1.1"/><path d="M187.400 104l2.400 2.800 4.200-5.600" stroke="#555" stroke-width="1.4" fill="none"/>
<path d="M933.800 102.800l2.200 2.200 2.200-2.200" stroke="#555" stroke-width="1.300" fill="none"/>
<path d="M92.6 532l-2 2.3 2 2.3zM103 532l2 2.3-2 2.3z" fill="#c4c4c4"/>
<rect x="121.60" y="528.00" width="38.00" height="11.00" fill="#fff" />
<line x1="121.60" y1="539.00" x2="159.60" y2="539.00" stroke="#1e6c47" stroke-width="1.3" />
<circle cx="176.6" cy="534.4" r="3.9" fill="none" stroke="#7a7a7a" stroke-width="0.6"/><path d="M174.6 534.4h4M176.6 532.4v4" stroke="#7a7a7a" stroke-width="0.6"/>
<rect x="596.20" y="531.40" width="0.70" height="0.90" fill="#a0a0a0" />
<rect x="596.20" y="533.60" width="0.70" height="0.90" fill="#a0a0a0" />
<rect x="596.20" y="535.80" width="0.70" height="0.90" fill="#a0a0a0" />
<rect x="604.50" y="529.20" width="328.00" height="10.20" fill="#f0f0f0" />
<rect x="604.70" y="529.40" width="8.40" height="9.80" fill="#fff" stroke="#cfcfcf" stroke-width="0.5"/>
<path d="M609.8 532.2l-2.2 2.1 2.2 2.1z" fill="#555"/>
<rect x="613.40" y="529.40" width="294.00" height="9.80" fill="#fff" stroke="#d5d5d5" stroke-width="0.5"/>
<rect x="907.60" y="529.40" width="15.60" height="9.80" fill="#d9d9d9" />
<rect x="923.40" y="529.40" width="8.60" height="9.80" fill="#fff" stroke="#cfcfcf" stroke-width="0.5"/>
<path d="M926.6 532.2l2.2 2.1-2.2 2.1z" fill="#555"/>
<line x1="80.00" y1="528.20" x2="944.00" y2="528.20" stroke="#cfcfcf" stroke-width="0.7" />
<rect x="721.4" y="543.4" width="6.6" height="4.8" fill="#555"/><path d="M723 549.8h3.4" stroke="#555" stroke-width="0.8"/><circle cx="728.4" cy="549" r="1.7" fill="#555" stroke="#f3f3f3" stroke-width="0.5"/>
<g stroke="#bdbdbd" stroke-width="0.6" fill="none"><rect x="776.4" y="543.6" width="7" height="6.6"/><path d="M776.4 545.8h7M776.4 548h7M778.8 543.6v6.6M781.2 543.6v6.6"/><rect x="799.4" y="543.6" width="7" height="6.6"/><rect x="801" y="545" width="3.8" height="5.2"/><rect x="822.4" y="543.6" width="7" height="6.6"/><path d="M824.6 543.6v3.4h3v-3.4"/></g>
<line x1="841.40" y1="547.00" x2="844.60" y2="547.00" stroke="#c2c2c2" stroke-width="0.7" />
<line x1="848.80" y1="547.00" x2="905.00" y2="547.00" stroke="#c9c9c9" stroke-width="0.7" />
<rect x="876.00" y="544.80" width="1.20" height="4.40" fill="#b5b5b5" />
<path d="M909 547h3.6M910.8 545.2v3.6" stroke="#c2c2c2" stroke-width="0.7"/>
<rect x="80.00" y="553.00" width="864.00" height="23.00" fill="#1b2a40" />
<rect x="80.00" y="553.00" width="28.00" height="23.00" fill="#203a46" />
<g fill="#fff"><path d="M89 561.6l4-.55v3.5h-4zM93.6 560.95l4.9-.7v4.3h-4.9zM89 565.1h4v3.5l-4-.55zM93.6 565.1h4.9v4.3l-4.9-.7z"/></g>
<rect x="108.00" y="553.00" width="197.00" height="23.00" fill="#f6f6f6" />
<circle cx="120.600" cy="563.200" r="3" fill="none" stroke="#444" stroke-width="0.9"/><path d="M118.600 565.600l-3.600 3.400" stroke="#444" stroke-width="1"/>
<circle cx="319" cy="564.4" r="3.6" fill="none" stroke="#fff" stroke-width="1.2"/>
<g stroke="#e8e8e8" stroke-width="0.8" fill="none"><rect x="343.2" y="561.4" width="4.6" height="6"/><path d="M341.4 560.6v7.6M349.6 560.6v2M349.6 564v2M349.6 567.4v.8M343.2 560.2h4.6M343.2 568.6h4.6" /></g>
<path d="M370.6 559.2h4l1 1.2h5.8v8.4h-10.8z" fill="#f0b93a"/><path d="M370.6 561.6h10.8v7.2h-10.8z" fill="#f7d36b"/><rect x="373.6" y="565" width="4.8" height="3.8" fill="#3d8fd6"/><rect x="374.6" y="566" width="2.8" height="2.8" fill="#f7d36b"/>
<rect x="399.4" y="558.8" width="10.6" height="10.6" fill="#1c7fd6"/><path d="M399.4 569.4l4.4-6 3 3.6 1.2-1.2 2 3.6z" fill="#0d4f9e"/><circle cx="407.4" cy="561.4" r="0.9" fill="#fff"/>
<path d="M427.4 562h11.6v8h-11.6z" fill="#f4f4f4"/><path d="M430.6 562v-1.4a2.6 2.6 0 0 1 5.2 0v1.4" fill="none" stroke="#f4f4f4" stroke-width="0.8"/><rect x="431" y="564" width="2" height="2" fill="#e8492e"/><rect x="433.4" y="564" width="2" height="2" fill="#7cba2c"/><rect x="431" y="566.4" width="2" height="2" fill="#2c9ee8"/><rect x="433.4" y="566.4" width="2" height="2" fill="#f5b91d"/>
<defs><linearGradient id="eg" x1="0" y1="0" x2="1" y2="1"><stop offset="0" stop-color="#35c1f1"/><stop offset="1" stop-color="#0c59a4"/></linearGradient></defs>
<circle cx="462" cy="564.4" r="5.5" fill="url(#eg)"/><path d="M457.200 561.800a5.500 5.500 0 0 1 10.200 1.400c.3 1.800-.8 3-2.600 3-1 0-1.600-.4-1.600-1 0-.5.400-.8.400-1.400 0-1-1-1.800-2.400-1.800-1.600 0-3.200.8-4-.2z" fill="#4fd68b" fill-opacity="0.9"/><path d="M460.600 565.200c0 2 1.600 3.600 4 3.600.8 0 1.600-.2 2.200-.5-1.600 1.800-4.800 2-6.600.2-1-1-1.200-2.600-.6-3.800.2-.4 1 0 1 .5z" fill="#0a4a8c"/>
<path d="M487.6 559.4l6.6-1 1.4 9.6-6.6 1.6z" fill="#dfe9ee"/><path d="M488.6 560.6l5-.8 1 7.4-5 1.2z" fill="#8fc6e2"/><path d="M487.6 559.4l-1.4 8.8 2.8 1.4z" fill="#b0b8bd"/>
<circle cx="519" cy="564.6" r="6.4" fill="#fff200"/>
<path d="M548.6 558.4l1 4.6 4-1.2-3 3.4 2.2 4-4.2-2.2-3.4 3 .8-4.4-3.4-2.2 4-.6z" fill="#a9c4ee"/><path d="M549.6 562.6l4.8 5.6-2.2.2 1 2.2-1.2.5-1-2.3-1.6 1.4z" fill="#fff" stroke="#333" stroke-width="0.4"/>
<path d="M571.2 562.2l5.8-3.4 5.8 3.4v7.4h-11.6z" fill="#1b78d0"/><path d="M571.2 562.6l5.8 4 5.8-4v7h-11.6z" fill="#3aa0ee"/><path d="M571.2 562.6l5.8 4 5.8-4z" fill="#fff"/>
<rect x="600.6" y="559" width="11" height="11" fill="#24313f"/><path d="M603.4 561.4l3.2 3.2-3.2 3.2M606.4 564.8l3-3 .1 6z" fill="#29d7c3" stroke="#29d7c3" stroke-width="0.6"/><path d="M603 560.4l2.4 2-1.4 1.4z" fill="#fff"/>
<rect x="621.00" y="553.00" width="27.00" height="23.00" fill="#45525f" />
<rect x="631.6" y="558.4" width="9.6" height="11.6" rx="0.8" fill="#1d7b48"/><rect x="636" y="558.4" width="5.2" height="5.8" fill="#2fa266"/><rect x="628.8" y="561" width="6.8" height="6.8" rx="0.6" fill="#0f5c33"/>
<rect x="656" y="559.2" width="9.4" height="7.4" rx="1.2" fill="#2aa7dc"/><path d="M665.4 562l3.2-2v5.8l-3.2-2z" fill="#2aa7dc"/><circle cx="660.6" cy="562.8" r="2.2" fill="#fff"/><circle cx="660.6" cy="562.8" r="1.3" fill="#e2353a"/><path d="M660.6 566.6v2.4M658 569.4h5.2" stroke="#2aa7dc" stroke-width="0.8"/>
<rect x="508.00" y="574.80" width="23.00" height="1.20" fill="#9fc9ee" />
<rect x="594.00" y="574.80" width="26.00" height="1.20" fill="#9fc9ee" />
<rect x="621.50" y="574.80" width="26.00" height="1.20" fill="#9fc9ee" />
<rect x="649.00" y="574.80" width="27.00" height="1.20" fill="#9fc9ee" />
<path d="M709.4 566l2.6-2.6 2.6 2.6" stroke="#e6e6e6" stroke-width="0.8" fill="none"/>
<g fill="#c9c9c9" stroke="#c9c9c9" stroke-width="0.5"><path d="M727 563.2h1.6l2-1.8v6l-2-1.8h-1.6z"/><path d="M732 562.4c1 .8 1 3.2 0 4M733.4 561.2c1.8 1.6 1.8 4.8 0 6.400" fill="none"/></g>
<g stroke="#bfbfbf" stroke-width="0.7" fill="none"><rect x="747" y="561.6" width="5.6" height="4.6"/><path d="M752.6 563h1.4v3.6M749 568.4h3"/></g>
<path d="M764 563.4a2 2 0 0 1 3.6-.8 1.7 1.7 0 0 1 2.4 1.6 1.4 1.4 0 0 1-.4 2.700h-5a1.800 1.800 0 0 1-.6-3.500z" fill="#e3e3e3"/>
<circle cx="786.4" cy="565" r="2.800" fill="#d9d9d9"/><circle cx="788" cy="565.600" r="1.400" fill="#e2353a"/>
<g stroke="#bfbfbf" stroke-width="0.7" fill="none"><rect x="803" y="561.6" width="5.6" height="4.6"/><path d="M808.600 563h1.400v3.600"/></g>
<path d="M820.6 568.4l4.600-5.600 1.400 1.200-4.600 5.600zM825 561.400l1.600-1 1.600 1.600-1 1.400z" fill="#c9c9c9"/>
<circle cx="858.2" cy="563.6" r="3.9" fill="#1f77d8"/><circle cx="860.800" cy="566.2" r="1.500" fill="#f5c21d"/><circle cx="859.600" cy="566.800" r="1" fill="#e2353a"/>
<path d="M920.4 560.400h8.800v6.200h-2.200v2.200l-2.200-2.200h-4.400z" fill="#fff"/><path d="M922 562.400h5.600M922 564.200h5.600" stroke="#1b2a40" stroke-width="0.6"/><circle cx="928.6" cy="567.6" r="1.500" fill="#1b2a40" stroke="#fff" stroke-width="0.5"/>
<line x1="941.00" y1="553.00" x2="941.00" y2="576.00" stroke="#5a6773" stroke-width="0.6" />
<rect x="223.50" y="477.30" width="191.00" height="10.00" fill="#fff" stroke="#c8c8c8" stroke-width="0.6"/>
<rect x="94.25" y="126.4" width="43.4" height="270" fill="none" stroke="#ff0000" stroke-width="4.6"/>
<rect x="295.3" y="471.3" width="49.400" height="20.200" fill="none" stroke="#ff0000" stroke-width="4.6"/>
<circle cx="115" cy="154" r="7.2" fill="#f05a50" fill-opacity="0.62"/>
<path d="M113.7 150h2.600v2.700h2.700v2.600h-2.700v2.700h-2.600v-2.700h-2.700v-2.600h2.700z" fill="#fff" stroke="#333" stroke-width="0.45"/>
</svg>
<span class="t" style="top:118.61px;font-size:8.25px;color:#444;left:16.40px;width:200px;text-align:center;">A</span>
<span class="t" style="top:118.61px;font-size:8.25px;color:#444;left:55.90px;width:200px;text-align:center;">B</span>
<span class="t" style="top:118.61px;font-size:8.25px;color:#444;left:95.40px;width:200px;text-align:center;">C</span>
<span class="t" style="top:118.61px;font-size:8.25px;color:#1e6c47;left:137.78px;width:200px;text-align:center;">D</span>
<span class="t" style="top:118.61px;font-size:8.25px;color:#444;left:182.48px;width:200px;text-align:center;">E</span>
<span class="t" style="top:118.61px;font-size:8.25px;color:#444;left:227.05px;width:200px;text-align:center;">F</span>
<span class="t" style="top:118.61px;font-size:8.25px;color:#444;left:272.00px;width:200px;text-align:center;">G</span>
<span class="t" style="top:118.61px;font-size:8.25px;color:#444;left:317.00px;width:200px;text-align:center;">H</span>
<span class="t" style="top:118.61px;font-size:8.25px;color:#444;left:361.65px;width:200px;text-align:center;">I</span>
<span class="t" style="top:118.61px;font-size:8.25px;color:#444;left:407.15px;width:200px;text-align:center;">J</span>
<span class="t" style="top:118.61px;font-size:8.25px;color:#444;left:450.00px;width:200px;text-align:center;">K</span>
<span class="t" style="top:118.61px;font-size:8.25px;color:#444;left:488.55px;width:200px;text-align:center;">L</span>
<span class="t" style="top:118.61px;font-size:8.25px;color:#444;left:526.55px;width:200px;text-align:center;">M</span>
<span class="t" style="top:118.61px;font-size:8.25px;color:#444;left:565.60px;width:200px;text-align:center;">N</span>
<span class="t" style="top:118.61px;font-size:8.25px;color:#444;left:605.60px;width:200px;text-align:center;">O</span>
<span class="t" style="top:118.61px;font-size:8.25px;color:#444;left:645.60px;width:200px;text-align:center;">P</span>
<span class="t" style="top:118.61px;font-size:8.25px;color:#444;left:685.45px;width:200px;text-align:center;">Q</span>
<span class="t" style="top:118.61px;font-size:8.25px;color:#444;left:725.35px;width:200px;text-align:center;">R</span>
<span class="t" style="top:118.61px;font-size:8.25px;color:#444;left:765.10px;width:200px;text-align:center;">S</span>
<span class="t" style="top:118.61px;font-size:8.25px;color:#444;left:804.70px;width:200px;text-align:center;">T</span>
<span class="t" style="top:132.21px;font-size:8.25px;color:#444;left:-11.80px;width:200px;text-align:center;">1</span>
<span class="t" style="top:146.01px;font-size:8.25px;color:#444;left:-11.80px;width:200px;text-align:center;">2</span>
<span class="t" style="top:159.81px;font-size:8.25px;color:#444;left:-11.80px;width:200px;text-align:center;">3</span>
<span class="t" style="top:173.61px;font-size:8.25px;color:#444;left:-11.80px;width:200px;text-align:center;">4</span>
<span class="t" style="top:187.41px;font-size:8.25px;color:#444;left:-11.80px;width:200px;text-align:center;">5</span>
<span class="t" style="top:201.21px;font-size:8.25px;color:#444;left:-11.80px;width:200px;text-align:center;">6</span>
<span class="t" style="top:215.01px;font-size:8.25px;color:#444;left:-11.80px;width:200px;text-align:center;">7</span>
<span class="t" style="top:228.81px;font-size:8.25px;color:#444;left:-11.80px;width:200px;text-align:center;">8</span>
<span class="t" style="top:242.61px;font-size:8.25px;color:#444;left:-11.80px;width:200px;text-align:center;">9</span>
<span class="t" style="top:256.41px;font-size:8.25px;color:#444;left:-11.80px;width:200px;text-align:center;">10</span>
<span class="t" style="top:270.21px;font-size:8.25px;color:#444;left:-11.80px;width:200px;text-align:center;">11</span>
<span class="t" style="top:284.01px;font-size:8.25px;color:#444;left:-11.80px;width:200px;text-align:center;">12</span>
<span class="t" style="top:297.81px;font-size:8.25px;color:#444;left:-11.80px;width:200px;text-align:center;">13</span>
<span class="t" style="top:311.61px;font-size:8.25px;color:#444;left:-11.80px;width:200px;text-align:center;">14</span>
<span class="t" style="top:325.41px;font-size:8.25px;color:#444;left:-11.80px;width:200px;text-align:center;">15</span>
<span class="t" style="top:339.21px;font-size:8.25px;color:#444;left:-11.80px;width:200px;text-align:center;">16</span>
<span class="t" style="top:353.01px;font-size:8.25px;color:#444;left:-11.80px;width:200px;text-align:center;">17</span>
<span class="t" style="top:366.81px;font-size:8.25px;color:#444;left:-11.80px;width:200px;text-align:center;">18</span>
<span class="t" style="top:380.61px;font-size:8.25px;color:#444;left:-11.80px;width:200px;text-align:center;">19</span>
<span class="t" style="top:394.41px;font-size:8.25px;color:#444;left:-11.80px;width:200px;text-align:center;">20</span>
<span class="t" style="top:408.21px;font-size:8.25px;color:#444;left:-11.80px;width:200px;text-align:center;">21</span>
<span class="t" style="top:422.01px;font-size:8.25px;color:#444;left:-11.80px;width:200px;text-align:center;">22</span>
<span class="t" style="top:435.81px;font-size:8.25px;color:#444;left:-11.80px;width:200px;text-align:center;">23</span>
<span class="t" style="top:449.61px;font-size:8.25px;color:#444;left:-11.80px;width:200px;text-align:center;">24</span>
<span class="t" style="top:463.41px;font-size:8.25px;color:#1e6c47;left:-11.80px;width:200px;text-align:center;">25</span>
<span class="t" style="top:477.21px;font-size:8.25px;color:#444;left:-11.80px;width:200px;text-align:center;">26</span>
<span class="t" style="top:491.01px;font-size:8.25px;color:#444;left:-11.80px;width:200px;text-align:center;">27</span>
<span class="t" style="top:504.81px;font-size:8.25px;color:#444;left:-11.80px;width:200px;text-align:center;">28</span>
<span class="t" style="top:518.61px;font-size:8.25px;color:#444;left:-11.80px;width:200px;text-align:center;">29</span>
<span class="t" style="top:132.31px;font-size:8.25px;color:#444;left:98.50px;">都道府県</span>
<span class="t" style="top:132.31px;font-size:8.25px;color:#444;left:138.30px;">店舗名</span>
<span class="t" style="top:132.31px;font-size:8.25px;color:#444;left:177.50px;">担当者</span>
<span class="t" style="top:132.31px;font-size:8.25px;color:#444;left:217.30px;">商品A個数</span>
<span class="t" style="top:132.31px;font-size:8.25px;color:#444;left:262.25px;">商品A合計</span>
<span class="t" style="top:132.31px;font-size:8.25px;color:#444;left:306.70px;">商品B個数</span>
<span class="t" style="top:132.31px;font-size:8.25px;color:#444;left:351.40px;">商品B合計</span>
<span class="t" style="top:132.31px;font-size:8.25px;color:#444;left:396.60px;">商品C個数</span>
<span class="t" style="top:132.31px;font-size:8.25px;color:#444;left:441.40px;">商品C合計</span>
<span class="t" style="top:132.31px;font-size:8.25px;color:#444;left:485.90px;">総合計</span>
<span class="t" style="top:146.11px;font-size:8.25px;color:#444;left:98.50px;">東京</span>
<span class="t" style="top:146.11px;font-size:8.25px;color:#444;left:138.30px;">店舗A</span>
<span class="t" style="top:146.11px;font-size:8.25px;color:#444;left:177.50px;">田中</span>
<span class="t" style="top:146.11px;font-size:8.25px;color:#444;right:765.35px;">19</span>
<span class="t" style="top:146.11px;font-size:8.25px;color:#444;right:720.90px;">22800</span>
<span class="t" style="top:146.11px;font-size:8.25px;color:#444;right:676.20px;">13</span>
<span class="t" style="top:146.11px;font-size:8.25px;color:#444;right:631.00px;">19500</span>
<span class="t" style="top:146.11px;font-size:8.25px;color:#444;right:586.20px;">10</span>
<span class="t" style="top:146.11px;font-size:8.25px;color:#444;right:541.70px;">20000</span>
<span class="t" style="top:146.11px;font-size:8.25px;color:#444;right:495.20px;">62300</span>
<span class="t" style="top:159.91px;font-size:8.25px;color:#444;left:98.50px;">東京</span>
<span class="t" style="top:159.91px;font-size:8.25px;color:#444;left:138.30px;">店舗B</span>
<span class="t" style="top:159.91px;font-size:8.25px;color:#444;left:177.50px;">山田</span>
<span class="t" style="top:159.91px;font-size:8.25px;color:#444;right:765.35px;">17</span>
<span class="t" style="top:159.91px;font-size:8.25px;color:#444;right:720.90px;">20400</span>
<span class="t" style="top:159.91px;font-size:8.25px;color:#444;right:676.20px;">10</span>
<span class="t" style="top:159.91px;font-size:8.25px;color:#444;right:631.00px;">15000</span>
<span class="t" style="top:159.91px;font-size:8.25px;color:#444;right:586.20px;">7</span>
<span class="t" style="top:159.91px;font-size:8.25px;color:#444;right:541.70px;">14000</span>
<span class="t" style="top:159.91px;font-size:8.25px;color:#444;right:495.20px;">49400</span>
<span class="t" style="top:173.71px;font-size:8.25px;color:#444;left:98.50px;">東京</span>
<span class="t" style="top:173.71px;font-size:8.25px;color:#444;left:138.30px;">店舗C</span>
<span class="t" style="top:173.71px;font-size:8.25px;color:#444;left:177.50px;">鈴木</span>
<span class="t" style="top:173.71px;font-size:8.25px;color:#444;right:765.35px;">18</span>
<span class="t" style="top:173.71px;font-size:8.25px;color:#444;right:720.90px;">21600</span>
<span class="t" style="top:173.71px;font-size:8.25px;color:#444;right:676.20px;">13</span>
<span class="t" style="top:173.71px;font-size:8.25px;color:#444;right:631.00px;">19500</span>
<span class="t" style="top:173.71px;font-size:8.25px;color:#444;right:586.20px;">5</span>
<span class="t" style="top:173.71px;font-size:8.25px;color:#444;right:541.70px;">10000</span>
<span class="t" style="top:173.71px;font-size:8.25px;color:#444;right:495.20px;">51100</span>
<span class="t" style="top:187.51px;font-size:8.25px;color:#444;left:98.50px;">大阪</span>
<span class="t" style="top:187.51px;font-size:8.25px;color:#444;left:138.30px;">店舗A</span>
<span class="t" style="top:187.51px;font-size:8.25px;color:#444;left:177.50px;">山本</span>
<span class="t" style="top:187.51px;font-size:8.25px;color:#444;right:765.35px;">15</span>
<span class="t" style="top:187.51px;font-size:8.25px;color:#444;right:720.90px;">18000</span>
<span class="t" style="top:187.51px;font-size:8.25px;color:#444;right:676.20px;">6</span>
<span class="t" style="top:187.51px;font-size:8.25px;color:#444;right:631.00px;">9000</span>
<span class="t" style="top:187.51px;font-size:8.25px;color:#444;right:586.20px;">9</span>
<span class="t" style="top:187.51px;font-size:8.25px;color:#444;right:541.70px;">18000</span>
<span class="t" style="top:187.51px;font-size:8.25px;color:#444;right:495.20px;">45000</span>
<span class="t" style="top:201.31px;font-size:8.25px;color:#444;left:98.50px;">大阪</span>
<span class="t" style="top:201.31px;font-size:8.25px;color:#444;left:138.30px;">店舗B</span>
<span class="t" style="top:201.31px;font-size:8.25px;color:#444;left:177.50px;">佐藤</span>
<span class="t" style="top:201.31px;font-size:8.25px;color:#444;right:765.35px;">16</span>
<span class="t" style="top:201.31px;font-size:8.25px;color:#444;right:720.90px;">19200</span>
<span class="t" style="top:201.31px;font-size:8.25px;color:#444;right:676.20px;">10</span>
<span class="t" style="top:201.31px;font-size:8.25px;color:#444;right:631.00px;">15000</span>
<span class="t" style="top:201.31px;font-size:8.25px;color:#444;right:586.20px;">4</span>
<span class="t" style="top:201.31px;font-size:8.25px;color:#444;right:541.70px;">8000</span>
<span class="t" style="top:201.31px;font-size:8.25px;color:#444;right:495.20px;">42200</span>
<span class="t" style="top:215.11px;font-size:8.25px;color:#444;left:98.50px;">大阪</span>
<span class="t" style="top:215.11px;font-size:8.25px;color:#444;left:138.30px;">店舗C</span>
<span class="t" style="top:215.11px;font-size:8.25px;color:#444;left:177.50px;">大田</span>
<span class="t" style="top:215.11px;font-size:8.25px;color:#444;right:765.35px;">13</span>
<span class="t" style="top:215.11px;font-size:8.25px;color:#444;right:720.90px;">15600</span>
<span class="t" style="top:215.11px;font-size:8.25px;color:#444;right:676.20px;">7</span>
<span class="t" style="top:215.11px;font-size:8.25px;color:#444;right:631.00px;">10500</span>
<span class="t" style="top:215.11px;font-size:8.25px;color:#444;right:586.20px;">5</span>
<span class="t" style="top:215.11px;font-size:8.25px;color:#444;right:541.70px;">10000</span>
<span class="t" style="top:215.11px;font-size:8.25px;color:#444;right:495.20px;">36100</span>
<span class="t" style="top:228.91px;font-size:8.25px;color:#444;left:98.50px;">福岡</span>
<span class="t" style="top:228.91px;font-size:8.25px;color:#444;left:138.30px;">店舗A</span>
<span class="t" style="top:228.91px;font-size:8.25px;color:#444;left:177.50px;">井上</span>
<span class="t" style="top:228.91px;font-size:8.25px;color:#444;right:765.35px;">15</span>
<span class="t" style="top:228.91px;font-size:8.25px;color:#444;right:720.90px;">18000</span>
<span class="t" style="top:228.91px;font-size:8.25px;color:#444;right:676.20px;">8</span>
<span class="t" style="top:228.91px;font-size:8.25px;color:#444;right:631.00px;">12000</span>
<span class="t" style="top:228.91px;font-size:8.25px;color:#444;right:586.20px;">4</span>
<span class="t" style="top:228.91px;font-size:8.25px;color:#444;right:541.70px;">8000</span>
<span class="t" style="top:228.91px;font-size:8.25px;color:#444;right:495.20px;">38000</span>
<span class="t" style="top:242.71px;font-size:8.25px;color:#444;left:98.50px;">福岡</span>
<span class="t" style="top:242.71px;font-size:8.25px;color:#444;left:138.30px;">店舗B</span>
<span class="t" style="top:242.71px;font-size:8.25px;color:#444;left:177.50px;">高橋</span>
<span class="t" style="top:242.71px;font-size:8.25px;color:#444;right:765.35px;">11</span>
<span class="t" style="top:242.71px;font-size:8.25px;color:#444;right:720.90px;">13200</span>
<span class="t" style="top:242.71px;font-size:8.25px;color:#444;right:676.20px;">4</span>
<span class="t" style="top:242.71px;font-size:8.25px;color:#444;right:631.00px;">6000</span>
<span class="t" style="top:242.71px;font-size:8.25px;color:#444;right:586.20px;">8</span>
<span class="t" style="top:242.71px;font-size:8.25px;color:#444;right:541.70px;">16000</span>
<span class="t" style="top:242.71px;font-size:8.25px;color:#444;right:495.20px;">35200</span>
<span class="t" style="top:256.51px;font-size:8.25px;color:#444;left:98.50px;">福岡</span>
<span class="t" style="top:256.51px;font-size:8.25px;color:#444;left:138.30px;">店舗C</span>
<span class="t" style="top:256.51px;font-size:8.25px;color:#444;left:177.50px;">渡辺</span>
<span class="t" style="top:256.51px;font-size:8.25px;color:#444;right:765.35px;">14</span>
<span class="t" style="top:256.51px;font-size:8.25px;color:#444;right:720.90px;">16800</span>
<span class="t" style="top:256.51px;font-size:8.25px;color:#444;right:676.20px;">8</span>
<span class="t" style="top:256.51px;font-size:8.25px;color:#444;right:631.00px;">12000</span>
<span class="t" style="top:256.51px;font-size:8.25px;color:#444;right:586.20px;">5</span>
<span class="t" style="top:256.51px;font-size:8.25px;color:#444;right:541.70px;">10000</span>
<span class="t" style="top:256.51px;font-size:8.25px;color:#444;right:495.20px;">38800</span>
<span class="t" style="top:270.31px;font-size:8.25px;color:#444;left:98.50px;">東京</span>
<span class="t" style="top:270.31px;font-size:8.25px;color:#444;left:138.30px;">店舗A</span>
<span class="t" style="top:270.31px;font-size:8.25px;color:#444;left:177.50px;">鈴木</span>
<span class="t" style="top:270.31px;font-size:8.25px;color:#444;right:765.35px;">16</span>
<span class="t" style="top:270.31px;font-size:8.25px;color:#444;right:720.90px;">19200</span>
<span class="t" style="top:270.31px;font-size:8.25px;color:#444;right:676.20px;">12</span>
<span class="t" style="top:270.31px;font-size:8.25px;color:#444;right:631.00px;">18000</span>
<span class="t" style="top:270.31px;font-size:8.25px;color:#444;right:586.20px;">3</span>
<span class="t" style="top:270.31px;font-size:8.25px;color:#444;right:541.70px;">6000</span>
<span class="t" style="top:270.31px;font-size:8.25px;color:#444;right:495.20px;">43200</span>
<span class="t" style="top:284.11px;font-size:8.25px;color:#444;left:98.50px;">東京</span>
<span class="t" style="top:284.11px;font-size:8.25px;color:#444;left:138.30px;">店舗B</span>
<span class="t" style="top:284.11px;font-size:8.25px;color:#444;left:177.50px;">田中</span>
<span class="t" style="top:284.11px;font-size:8.25px;color:#444;right:765.35px;">15</span>
<span class="t" style="top:284.11px;font-size:8.25px;color:#444;right:720.90px;">18000</span>
<span class="t" style="top:284.11px;font-size:8.25px;color:#444;right:676.20px;">7</span>
<span class="t" style="top:284.11px;font-size:8.25px;color:#444;right:631.00px;">10500</span>
<span class="t" style="top:284.11px;font-size:8.25px;color:#444;right:586.20px;">7</span>
<span class="t" style="top:284.11px;font-size:8.25px;color:#444;right:541.70px;">14000</span>
<span class="t" style="top:284.11px;font-size:8.25px;color:#444;right:495.20px;">42500</span>
<span class="t" style="top:297.91px;font-size:8.25px;color:#444;left:98.50px;">東京</span>
<span class="t" style="top:297.91px;font-size:8.25px;color:#444;left:138.30px;">店舗C</span>
<span class="t" style="top:297.91px;font-size:8.25px;color:#444;left:177.50px;">山田</span>
<span class="t" style="top:297.91px;font-size:8.25px;color:#444;right:765.35px;">14</span>
<span class="t" style="top:297.91px;font-size:8.25px;color:#444;right:720.90px;">16800</span>
<span class="t" style="top:297.91px;font-size:8.25px;color:#444;right:676.20px;">9</span>
<span class="t" style="top:297.91px;font-size:8.25px;color:#444;right:631.00px;">13500</span>
<span class="t" style="top:297.91px;font-size:8.25px;color:#444;right:586.20px;">3</span>
<span class="t" style="top:297.91px;font-size:8.25px;color:#444;right:541.70px;">6000</span>
<span class="t" style="top:297.91px;font-size:8.25px;color:#444;right:495.20px;">36300</span>
<span class="t" style="top:311.71px;font-size:8.25px;color:#444;left:98.50px;">大阪</span>
<span class="t" style="top:311.71px;font-size:8.25px;color:#444;left:138.30px;">店舗A</span>
<span class="t" style="top:311.71px;font-size:8.25px;color:#444;left:177.50px;">佐藤</span>
<span class="t" style="top:311.71px;font-size:8.25px;color:#444;right:765.35px;">15</span>
<span class="t" style="top:311.71px;font-size:8.25px;color:#444;right:720.90px;">18000</span>
<span class="t" style="top:311.71px;font-size:8.25px;color:#444;right:676.20px;">4</span>
<span class="t" style="top:311.71px;font-size:8.25px;color:#444;right:631.00px;">6000</span>
<span class="t" style="top:311.71px;font-size:8.25px;color:#444;right:586.20px;">8</span>
<span class="t" style="top:311.71px;font-size:8.25px;color:#444;right:541.70px;">16000</span>
<span class="t" style="top:311.71px;font-size:8.25px;color:#444;right:495.20px;">40000</span>
<span class="t" style="top:325.51px;font-size:8.25px;color:#444;left:98.50px;">大阪</span>
<span class="t" style="top:325.51px;font-size:8.25px;color:#444;left:138.30px;">店舗B</span>
<span class="t" style="top:325.51px;font-size:8.25px;color:#444;left:177.50px;">大田</span>
<span class="t" style="top:325.51px;font-size:8.25px;color:#444;right:765.35px;">14</span>
<span class="t" style="top:325.51px;font-size:8.25px;color:#444;right:720.90px;">16800</span>
<span class="t" style="top:325.51px;font-size:8.25px;color:#444;right:676.20px;">6</span>
<span class="t" style="top:325.51px;font-size:8.25px;color:#444;right:631.00px;">9000</span>
<span class="t" style="top:325.51px;font-size:8.25px;color:#444;right:586.20px;">6</span>
<span class="t" style="top:325.51px;font-size:8.25px;color:#444;right:541.70px;">12000</span>
<span class="t" style="top:325.51px;font-size:8.25px;color:#444;right:495.20px;">37800</span>
<span class="t" style="top:339.31px;font-size:8.25px;color:#444;left:98.50px;">大阪</span>
<span class="t" style="top:339.31px;font-size:8.25px;color:#444;left:138.30px;">店舗C</span>
<span class="t" style="top:339.31px;font-size:8.25px;color:#444;left:177.50px;">山本</span>
<span class="t" style="top:339.31px;font-size:8.25px;color:#444;right:765.35px;">13</span>
<span class="t" style="top:339.31px;font-size:8.25px;color:#444;right:720.90px;">15600</span>
<span class="t" style="top:339.31px;font-size:8.25px;color:#444;right:676.20px;">8</span>
<span class="t" style="top:339.31px;font-size:8.25px;color:#444;right:631.00px;">12000</span>
<span class="t" style="top:339.31px;font-size:8.25px;color:#444;right:586.20px;">4</span>
<span class="t" style="top:339.31px;font-size:8.25px;color:#444;right:541.70px;">8000</span>
<span class="t" style="top:339.31px;font-size:8.25px;color:#444;right:495.20px;">35600</span>
<span class="t" style="top:353.11px;font-size:8.25px;color:#444;left:98.50px;">福岡</span>
<span class="t" style="top:353.11px;font-size:8.25px;color:#444;left:138.30px;">店舗A</span>
<span class="t" style="top:353.11px;font-size:8.25px;color:#444;left:177.50px;">高橋</span>
<span class="t" style="top:353.11px;font-size:8.25px;color:#444;right:765.35px;">16</span>
<span class="t" style="top:353.11px;font-size:8.25px;color:#444;right:720.90px;">19200</span>
<span class="t" style="top:353.11px;font-size:8.25px;color:#444;right:676.20px;">4</span>
<span class="t" style="top:353.11px;font-size:8.25px;color:#444;right:631.00px;">6000</span>
<span class="t" style="top:353.11px;font-size:8.25px;color:#444;right:586.20px;">7</span>
<span class="t" style="top:353.11px;font-size:8.25px;color:#444;right:541.70px;">14000</span>
<span class="t" style="top:353.11px;font-size:8.25px;color:#444;right:495.20px;">39200</span>
<span class="t" style="top:366.91px;font-size:8.25px;color:#444;left:98.50px;">福岡</span>
<span class="t" style="top:366.91px;font-size:8.25px;color:#444;left:138.30px;">店舗B</span>
<span class="t" style="top:366.91px;font-size:8.25px;color:#444;left:177.50px;">渡辺</span>
<span class="t" style="top:366.91px;font-size:8.25px;color:#444;right:765.35px;">19</span>
<span class="t" style="top:366.91px;font-size:8.25px;color:#444;right:720.90px;">22800</span>
<span class="t" style="top:366.91px;font-size:8.25px;color:#444;right:676.20px;">5</span>
<span class="t" style="top:366.91px;font-size:8.25px;color:#444;right:631.00px;">7500</span>
<span class="t" style="top:366.91px;font-size:8.25px;color:#444;right:586.20px;">5</span>
<span class="t" style="top:366.91px;font-size:8.25px;color:#444;right:541.70px;">10000</span>
<span class="t" style="top:366.91px;font-size:8.25px;color:#444;right:495.20px;">40300</span>
<span class="t" style="top:380.71px;font-size:8.25px;color:#444;left:98.50px;">福岡</span>
<span class="t" style="top:380.71px;font-size:8.25px;color:#444;left:138.30px;">店舗C</span>
<span class="t" style="top:380.71px;font-size:8.25px;color:#444;left:177.50px;">井上</span>
<span class="t" style="top:380.71px;font-size:8.25px;color:#444;right:765.35px;">17</span>
<span class="t" style="top:380.71px;font-size:8.25px;color:#444;right:720.90px;">20400</span>
<span class="t" style="top:380.71px;font-size:8.25px;color:#444;right:676.20px;">6</span>
<span class="t" style="top:380.71px;font-size:8.25px;color:#444;right:631.00px;">9000</span>
<span class="t" style="top:380.71px;font-size:8.25px;color:#444;right:586.20px;">6</span>
<span class="t" style="top:380.71px;font-size:8.25px;color:#444;right:541.70px;">12000</span>
<span class="t" style="top:380.71px;font-size:8.25px;color:#444;right:495.20px;">41400</span>
<span class="t" style="top:132.31px;font-size:8.25px;color:#444;left:571.60px;">商品名</span>
<span class="t" style="top:132.31px;font-size:8.25px;color:#444;left:609.50px;">単価</span>
<span class="t" style="top:146.11px;font-size:8.25px;color:#444;left:571.60px;">商品A</span>
<span class="t" style="top:146.11px;font-size:8.25px;color:#444;right:380.00px;">1200</span>
<span class="t" style="top:159.91px;font-size:8.25px;color:#444;left:571.60px;">商品B</span>
<span class="t" style="top:159.91px;font-size:8.25px;color:#444;right:380.00px;">1500</span>
<span class="t" style="top:173.71px;font-size:8.25px;color:#444;left:571.60px;">商品C</span>
<span class="t" style="top:173.71px;font-size:8.25px;color:#444;right:380.00px;">2000</span>
<span class="t" style="top:201.31px;font-size:8.25px;color:#444;left:571.60px;">都道府県</span>
<span class="t" style="top:201.31px;font-size:8.25px;color:#444;left:609.50px;">店舗名</span>
<span class="t" style="top:201.31px;font-size:8.25px;color:#444;left:647.60px;">担当者</span>
<span class="t" style="top:215.11px;font-size:8.25px;color:#444;left:609.50px;">店舗A</span>
<span class="t" style="top:215.11px;font-size:8.25px;color:#444;left:647.60px;">田中</span>
<span class="t" style="top:228.91px;font-size:8.25px;color:#444;left:609.50px;">店舗B</span>
<span class="t" style="top:228.91px;font-size:8.25px;color:#444;left:647.60px;">山田</span>
<span class="t" style="top:242.71px;font-size:8.25px;color:#444;left:609.50px;">店舗C</span>
<span class="t" style="top:242.71px;font-size:8.25px;color:#444;left:647.60px;">鈴木</span>
<span class="t" style="top:256.51px;font-size:8.25px;color:#444;left:609.50px;">店舗A</span>
<span class="t" style="top:256.51px;font-size:8.25px;color:#444;left:647.60px;">山本</span>
<span class="t" style="top:270.31px;font-size:8.25px;color:#444;left:609.50px;">店舗B</span>
<span class="t" style="top:270.31px;font-size:8.25px;color:#444;left:647.60px;">佐藤</span>
<span class="t" style="top:284.11px;font-size:8.25px;color:#444;left:609.50px;">店舗C</span>
<span class="t" style="top:284.11px;font-size:8.25px;color:#444;left:647.60px;">大田</span>
<span class="t" style="top:297.91px;font-size:8.25px;color:#444;left:609.50px;">店舗A</span>
<span class="t" style="top:297.91px;font-size:8.25px;color:#444;left:647.60px;">井上</span>
<span class="t" style="top:311.71px;font-size:8.25px;color:#444;left:609.50px;">店舗B</span>
<span class="t" style="top:311.71px;font-size:8.25px;color:#444;left:647.60px;">高橋</span>
<span class="t" style="top:325.51px;font-size:8.25px;color:#444;left:609.50px;">店舗C</span>
<span class="t" style="top:325.51px;font-size:8.25px;color:#444;left:647.60px;">渡辺</span>
<span class="t" style="top:228.91px;font-size:8.25px;color:#3c3c3c;left:488.55px;width:200px;text-align:center;">東京</span>
<span class="t" style="top:270.31px;font-size:8.25px;color:#3c3c3c;left:488.55px;width:200px;text-align:center;">大阪</span>
<span class="t" style="top:311.71px;font-size:8.25px;color:#3c3c3c;left:488.55px;width:200px;text-align:center;">福岡</span>
<span class="t" style="top:408.31px;font-size:8.25px;color:#444;left:98.50px;">都道府県</span>
<span class="t" style="top:408.31px;font-size:8.25px;color:#444;left:138.30px;">店舗名</span>
<span class="t" style="top:408.31px;font-size:8.25px;color:#444;left:177.50px;">合計</span>
<span class="t" style="top:422.11px;font-size:8.25px;color:#444;left:98.50px;">東京</span>
<span class="t" style="top:422.11px;font-size:8.25px;color:#444;left:138.30px;">店舗A</span>
<span class="t" style="top:422.11px;font-size:8.25px;color:#444;right:810.30px;">105500</span>
<span class="t" style="top:449.71px;font-size:8.25px;color:#444;left:98.50px;">都道府県</span>
<span class="t" style="top:449.71px;font-size:8.25px;color:#444;left:138.30px;">店舗名</span>
<span class="t" style="top:449.71px;font-size:8.25px;color:#444;left:177.50px;">担当者</span>
<span class="t" style="top:449.71px;font-size:8.25px;color:#444;left:217.30px;">合計</span>
<span class="t" style="top:463.51px;font-size:8.25px;color:#444;left:98.50px;">東京</span>
<span class="t" style="top:463.51px;font-size:8.25px;color:#444;left:138.30px;">店舗A</span>
<span class="t" style="top:463.51px;font-size:8.25px;color:#444;left:177.50px;">田中</span>
<span class="t fit" id="t285" style="top:463.18px;font-size:8.7px;color:#333;left:217.75px;transform-origin:0 50%;transform:scaleX(0.948);">=SUMIFS(<span style="color:#4a7cc7">J2:J19</span>,<span style="color:#c8504a">A2:A19</span></span>
<span class="t fit" id="t286" style="top:5.24px;font-size:6.75px;color:#fff;left:435.75px;transform-origin:0 50%;transform:scaleX(1.027);">MoA Excel ㉚SUMIFS関数の使い方.xlsx</span>
<span class="t" style="top:5.24px;font-size:6.75px;color:#fff;left:564.40px;">-</span>
<span class="t fit" id="t288" style="top:5.24px;font-size:6.75px;color:#fff;left:571.00px;transform-origin:0 50%;transform:scaleX(0.969);">Excel</span>
<span class="t fit" id="t289" style="top:22.54px;font-size:6.75px;color:#fff;left:918.75px;transform-origin:0 50%;transform:scaleX(0.906);">共有</span>
<span class="t fit" id="t290" style="top:22.94px;font-size:6.75px;color:#fff;left:87.00px;transform-origin:0 50%;transform:scaleX(0.713);">ファイル</span>
<span class="t fit" id="t291" style="top:22.94px;font-size:6.75px;color:#fff;left:153.75px;transform-origin:0 50%;transform:scaleX(1.017);">挿入</span>
<span class="t fit" id="t292" style="top:22.94px;font-size:6.75px;color:#fff;left:182.00px;transform-origin:0 50%;transform:scaleX(0.816);">ページ レイアウト</span>
<span class="t fit" id="t293" style="top:22.94px;font-size:6.75px;color:#fff;left:242.50px;transform-origin:0 50%;transform:scaleX(1.017);">数式</span>
<span class="t fit" id="t294" style="top:22.94px;font-size:6.75px;color:#fff;left:271.25px;transform-origin:0 50%;transform:scaleX(0.827);">データ</span>
<span class="t fit" id="t295" style="top:22.94px;font-size:6.75px;color:#fff;left:302.50px;transform-origin:0 50%;transform:scaleX(1.017);">校閲</span>
<span class="t fit" id="t296" style="top:22.94px;font-size:6.75px;color:#fff;left:331.25px;transform-origin:0 50%;transform:scaleX(1.017);">表示</span>
<span class="t fit" id="t297" style="top:22.94px;font-size:6.75px;color:#fff;left:360.00px;transform-origin:0 50%;transform:scaleX(0.839);">ヘルプ</span>
<span class="t fit" id="t298" style="top:22.94px;font-size:6.75px;color:#fff;left:391.75px;transform-origin:0 50%;transform:scaleX(1.053);">PDFelement</span>
<span class="t fit" id="t299" style="top:22.94px;font-size:6.75px;color:#fff;left:462.50px;transform-origin:0 50%;transform:scaleX(0.833);">何をしますか</span>
<span class="t fit" id="t300" style="top:22.94px;font-size:6.75px;color:#1e6c47;left:121.25px;transform-origin:0 50%;transform:scaleX(0.910);">ホーム</span>
<span class="t fit" id="t301" style="top:59.64px;font-size:6.75px;color:#3b3b3b;left:86.00px;transform-origin:0 50%;transform:scaleX(0.851);">貼り付け</span>
<span class="t fit" id="t302" style="top:40.54px;font-size:6.75px;color:#3b3b3b;left:123.50px;transform-origin:0 50%;transform:scaleX(0.811);">切り取り</span>
<span class="t fit" id="t303" style="top:53.84px;font-size:6.75px;color:#3b3b3b;left:123.50px;transform-origin:0 50%;transform:scaleX(0.715);">コピー</span>
<span class="t fit" id="t304" style="top:67.34px;font-size:6.75px;color:#ababab;left:123.50px;transform-origin:0 50%;transform:scaleX(0.872);">書式のコピー/貼り付け</span>
<span class="t fit" id="t305" style="top:80.44px;font-size:6.75px;color:#2e2e2e;font-weight:500;left:114.00px;transform-origin:0 50%;transform:scaleX(0.730);">クリップボード</span>
<span class="t" style="top:43.75px;font-size:8.6px;color:#bdbdbd;left:292.00px;font-family:'Liberation Serif',serif;">11</span>
<span class="t" style="top:43.95px;font-size:8.6px;color:#555;left:314.40px;">A</span>
<span class="t" style="top:45.15px;font-size:7.4px;color:#555;left:327.60px;">A</span>
<span class="t" style="top:59.65px;font-size:9px;color:#8a8a8a;font-weight:700;left:200.60px;">B</span>
<span class="t" style="top:59.35px;font-size:9.4px;color:#9a9a9a;left:214.40px;font-style:italic;font-family:'Liberation Serif',serif;">I</span>
<span class="t" style="top:59.65px;font-size:9px;color:#a2a2a2;left:226.40px;">U</span>
<span class="t" style="top:59.15px;font-size:9.4px;color:#a2a2a2;left:296.20px;">A</span>
<span class="t" style="top:60.55px;font-size:4.6px;color:#8a8a8a;left:321.40px;">ア</span>
<span class="t" style="top:65.15px;font-size:4.6px;color:#a0a0a0;left:321.20px;">亜</span>
<span class="t fit" id="t315" style="top:80.44px;font-size:6.75px;color:#2e2e2e;font-weight:500;left:252.50px;transform-origin:0 50%;transform:scaleX(0.722);">フォント</span>
<span class="t fit" id="t316" style="top:45.14px;font-size:6.75px;color:#ababab;left:431.75px;transform-origin:0 50%;transform:scaleX(0.891);">折り返して全体を表示する</span>
<span class="t fit" id="t317" style="top:61.34px;font-size:6.75px;color:#ababab;left:431.75px;transform-origin:0 50%;transform:scaleX(0.905);">セルを結合して中央揃え</span>
<span class="t fit" id="t318" style="top:80.44px;font-size:6.75px;color:#2e2e2e;font-weight:500;left:417.50px;transform-origin:0 50%;transform:scaleX(1.017);">配置</span>
<span class="t fit" id="t319" style="top:44.74px;font-size:6.75px;color:#bcbcbc;left:522.00px;transform-origin:0 50%;transform:scaleX(0.962);">標準</span>
<span class="t" style="top:59.80px;font-size:9.6px;color:#8e8e8e;left:543.80px;">%</span>
<span class="t" style="top:58.65px;font-size:9px;color:#6e6e6e;font-weight:700;left:559.60px;">,</span>
<span class="t" style="top:60.80px;font-size:4.8px;color:#9a9a9a;left:577.00px;">.0</span>
<span class="t" style="top:65.60px;font-size:4.8px;color:#9a9a9a;left:574.00px;">.00</span>
<span class="t" style="top:60.80px;font-size:4.8px;color:#9a9a9a;left:587.00px;">.00</span>
<span class="t" style="top:65.60px;font-size:4.8px;color:#9a9a9a;left:590.00px;">.0</span>
<span class="t fit" id="t326" style="top:80.44px;font-size:6.75px;color:#2e2e2e;font-weight:500;left:546.25px;transform-origin:0 50%;transform:scaleX(0.980);">数値</span>
<span class="t fit" id="t327" style="top:58.84px;font-size:6.75px;color:#ababab;left:606.25px;transform-origin:0 50%;transform:scaleX(0.944);">条件付き</span>
<span class="t fit" id="t328" style="top:68.04px;font-size:6.75px;color:#ababab;left:609.25px;transform-origin:0 50%;transform:scaleX(0.980);">書式</span>
<span class="t fit" id="t329" style="top:58.84px;font-size:6.75px;color:#ababab;left:635.00px;transform-origin:0 50%;transform:scaleX(0.788);">テーブルとして</span>
<span class="t fit" id="t330" style="top:68.04px;font-size:6.75px;color:#ababab;left:637.00px;transform-origin:0 50%;transform:scaleX(0.944);">書式設定</span>
<span class="t fit" id="t331" style="top:58.84px;font-size:6.75px;color:#ababab;left:680.00px;transform-origin:0 50%;transform:scaleX(0.827);">セルの</span>
<span class="t fit" id="t332" style="top:68.04px;font-size:6.75px;color:#ababab;left:674.25px;transform-origin:0 50%;transform:scaleX(0.740);">スタイル</span>
<span class="t fit" id="t333" style="top:80.44px;font-size:6.75px;color:#2e2e2e;font-weight:500;left:643.25px;transform-origin:0 50%;transform:scaleX(0.759);">スタイル</span>
<span class="t fit" id="t334" style="top:58.84px;font-size:6.75px;color:#ababab;left:718.00px;transform-origin:0 50%;transform:scaleX(0.980);">挿入</span>
<span class="t fit" id="t335" style="top:58.84px;font-size:6.75px;color:#ababab;left:741.25px;transform-origin:0 50%;transform:scaleX(1.054);">削除</span>
<span class="t fit" id="t336" style="top:58.84px;font-size:6.75px;color:#ababab;left:765.50px;transform-origin:0 50%;transform:scaleX(1.036);">書式</span>
<span class="t fit" id="t337" style="top:80.44px;font-size:6.75px;color:#2e2e2e;font-weight:500;left:742.00px;transform-origin:0 50%;transform:scaleX(0.869);">セル</span>
<span class="t" style="top:35.77px;font-size:11.5px;color:#333;left:795.60px;">Σ</span>
<span class="t fit" id="t339" style="top:39.74px;font-size:6.75px;color:#222;left:805.00px;transform-origin:0 50%;transform:scaleX(0.895);">オート SUM</span>
<span class="t fit" id="t340" style="top:52.64px;font-size:6.75px;color:#ababab;left:805.00px;transform-origin:0 50%;transform:scaleX(0.720);">フィル</span>
<span class="t fit" id="t341" style="top:65.64px;font-size:6.75px;color:#222;left:805.00px;transform-origin:0 50%;transform:scaleX(0.740);">クリア</span>
<span class="t" style="top:37.90px;font-size:8.4px;color:#a6a6a6;left:860.20px;">A</span>
<span class="t" style="top:45.70px;font-size:8.4px;color:#a6a6a6;left:860.60px;">Z</span>
<span class="t fit" id="t344" style="top:58.84px;font-size:6.75px;color:#ababab;left:853.75px;transform-origin:0 50%;transform:scaleX(0.851);">並べ替えと</span>
<span class="t fit" id="t345" style="top:68.04px;font-size:6.75px;color:#ababab;left:852.50px;transform-origin:0 50%;transform:scaleX(0.743);">フィルター</span>
<span class="t fit" id="t346" style="top:58.84px;font-size:6.75px;color:#222;left:888.00px;transform-origin:0 50%;transform:scaleX(0.901);">検索と</span>
<span class="t fit" id="t347" style="top:68.04px;font-size:6.75px;color:#222;left:887.50px;transform-origin:0 50%;transform:scaleX(0.925);">選択</span>
<span class="t fit" id="t348" style="top:80.44px;font-size:6.75px;color:#2e2e2e;font-weight:500;left:843.75px;transform-origin:0 50%;transform:scaleX(0.980);">編集</span>
<span class="t fit" id="t349" style="top:98.80px;font-size:8px;color:#707070;left:85.50px;transform-origin:0 50%;transform:scaleX(0.970);">A2</span>
<span class="t" style="top:95.72px;font-size:10.5px;color:#555;left:208.20px;font-style:italic;font-family:'Liberation Serif',serif;">f</span>
<span class="t" style="top:100.15px;font-size:7px;color:#555;left:211.40px;font-style:italic;font-family:'Liberation Serif',serif;">x</span>
<span class="t fit" id="t352" style="top:97.17px;font-size:9.1px;color:#3a3a3a;left:232.00px;transform-origin:0 50%;transform:scaleX(0.907);">=SUMIFS(J2:J19,A2:A19</span>
<span class="t fit" id="t353" style="top:527.60px;font-size:8.4px;color:#1e6c47;left:127.25px;transform-origin:0 50%;transform:scaleX(0.966);">Sheet1</span>
<span class="t fit" id="t354" style="top:541.94px;font-size:6.75px;color:#555;left:84.50px;transform-origin:0 50%;">参照</span>
<span class="t fit" id="t355" style="top:541.94px;font-size:6.75px;color:#444;left:731.00px;transform-origin:0 50%;">表示設定</span>
<span class="t fit" id="t356" style="top:541.30px;font-size:7.6px;color:#c2c2c2;left:920.00px;transform-origin:0 50%;transform:scaleX(1.016);">100%</span>
<span class="t fit" id="t357" style="top:558.90px;font-size:8.4px;color:#444;left:130.40px;transform-origin:0 50%;transform:scaleX(0.873);">ここに入力して検索</span>
<span class="t" style="top:559.90px;font-size:5.6px;color:#fff;font-weight:700;left:630.60px;">x</span>
<span class="t fit" id="t359" style="top:556.15px;font-size:11px;color:#fff;left:839.75px;transform-origin:0 50%;transform:scaleX(0.685);font-family:'Liberation Serif',serif;">A</span>
<span class="t fit" id="t360" style="top:555.04px;font-size:6.75px;color:#fff;left:883.50px;transform-origin:0 50%;transform:scaleX(0.964);">18:34</span>
<span class="t fit" id="t361" style="top:565.74px;font-size:6.75px;color:#fff;left:873.50px;transform-origin:0 50%;transform:scaleX(1.062);">2021/06/10</span>
<span class="t fit" id="t362" style="top:477.34px;font-size:6.75px;color:#7a7a7a;left:227.00px;transform-origin:0 50%;">SUMIFS(合計対象範囲,</span>
<span class="t fit" id="t363" style="top:477.34px;font-size:6.75px;color:#222;font-weight:700;left:302.00px;transform-origin:0 50%;transform:scaleX(1.024);">条件範囲1</span>
<span class="t fit" id="t364" style="top:477.34px;font-size:6.75px;color:#7a7a7a;left:334.00px;transform-origin:0 50%;transform:scaleX(1.101);">, 条件1, [条件範囲2, ...)</span>
<span class="t fit" id="t365" style="top:555.20px;font-size:14.4px;color:#fff;left:735.50px;transform-origin:0 50%;transform:scaleX(1.018);text-shadow:0.7px 0 #444,-0.7px 0 #444,0 0.7px #444,0 -0.7px #444,0.5px 0.5px #444,-0.5px 0.5px #444,0.5px -0.5px #444,-0.5px -0.5px #444;">©</span>
<span class="t fit" id="t366" style="top:555.20px;font-size:14.4px;color:#fff;left:751.00px;transform-origin:0 50%;transform:scaleX(0.906);text-shadow:0.7px 0 #444,-0.7px 0 #444,0 0.7px #444,0 -0.7px #444,0.5px 0.5px #444,-0.5px 0.5px #444,0.5px -0.5px #444,-0.5px -0.5px #444;">2021</span>
<span class="t fit" id="t367" style="top:555.20px;font-size:14.4px;color:#fff;left:786.00px;transform-origin:0 50%;transform:scaleX(0.870);text-shadow:0.7px 0 #444,-0.7px 0 #444,0 0.7px #444,0 -0.7px #444,0.5px 0.5px #444,-0.5px 0.5px #444,0.5px -0.5px #444,-0.5px -0.5px #444;">saym.</span>
</body></html>
